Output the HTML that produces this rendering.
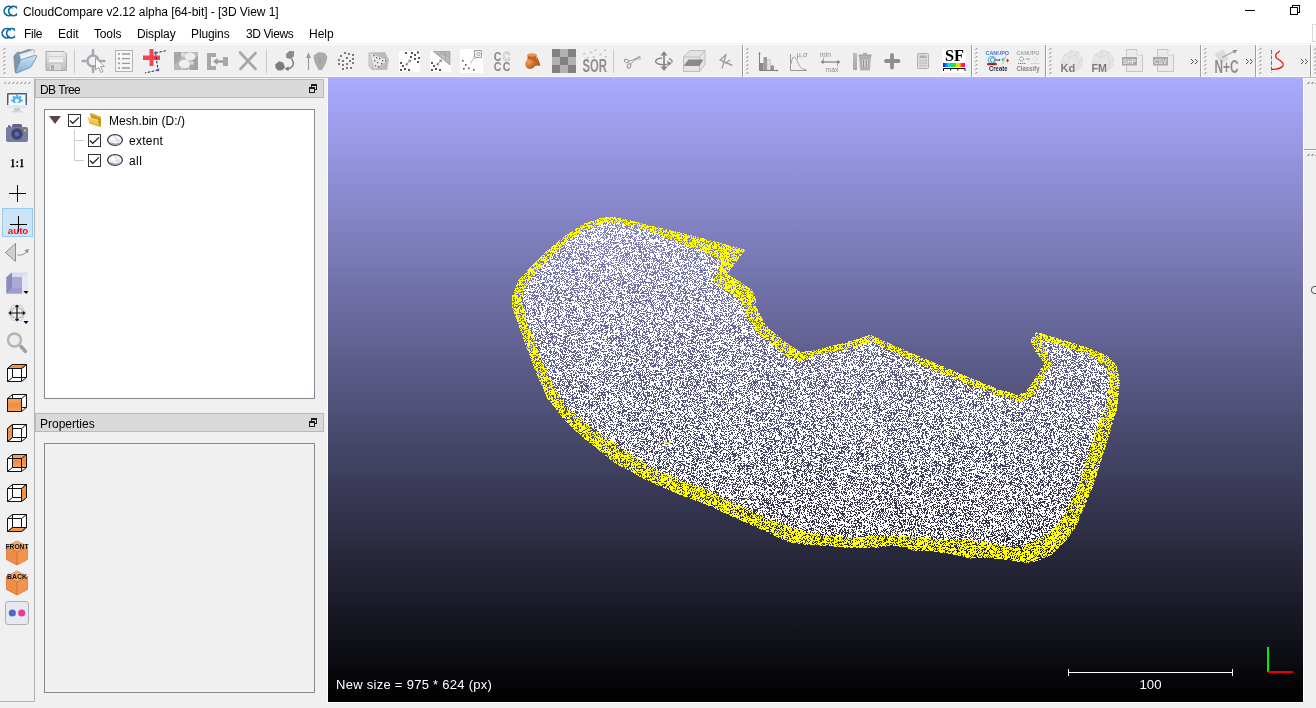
<!DOCTYPE html>
<html lang="en">
<head>
<meta charset="utf-8">
<title>CloudCompare v2.12 alpha [64-bit] - [3D View 1]</title>
<style>
html,body{margin:0;padding:0;}
body{width:1316px;height:708px;overflow:hidden;background:#f0f0f0;position:relative;
  font-family:"Liberation Sans",sans-serif;font-size:12px;color:#000;}
.abs{position:absolute;}
#titlebar{left:0;top:0;width:1316px;height:22px;background:#fff;}
#menubar{left:0;top:22px;width:1316px;height:21px;background:#fff;}
.t{position:absolute;white-space:nowrap;line-height:14px;will-change:transform;}
svg{will-change:transform;}
#toolbar{left:0;top:45px;width:1316px;height:32px;background:#f0f0f0;}
#tbline{left:0;top:43px;width:1316px;height:2px;background:linear-gradient(#f1f1f1 50%,#ffffff 50%);}
#tbbot{left:0;top:76px;width:1316px;height:3px;background:linear-gradient(#f8f8f8 33.3%,#bcbcbc 33.3%,#bcbcbc 66.6%,#f6f6f6 66.6%);}
#leftbar{left:0;top:78px;width:35px;height:624px;background:#f0f0f0;}
#view{left:328px;top:78px;width:975px;height:624px;
  background:linear-gradient(to bottom,#aaaaff 0%,#000000 100%);overflow:hidden;}
.docktitle{background:#d9d9d9;height:19px;box-sizing:border-box;border:1px solid #b9b9b9;}
.box{border:1px solid #828790;box-sizing:border-box;}
</style>
</head>
<body>
<div id="titlebar" class="abs">
  <span class="t" style="left:23px;top:5px;letter-spacing:-0.05px;">CloudCompare v2.12 alpha [64-bit] - [3D View 1]</span>
</div>
<div id="menubar" class="abs">
  <span class="t" style="left:24px;top:5px;letter-spacing:-0.3px;">File</span>
  <span class="t" style="left:58px;top:5px;">Edit</span>
  <span class="t" style="left:94px;top:5px;letter-spacing:-0.15px;">Tools</span>
  <span class="t" style="left:137px;top:5px;letter-spacing:-0.12px;">Display</span>
  <span class="t" style="left:191px;top:5px;letter-spacing:-0.12px;">Plugins</span>
  <span class="t" style="left:246px;top:5px;letter-spacing:-0.4px;">3D Views</span>
  <span class="t" style="left:309px;top:5px;">Help</span>
</div>
<div id="tbline" class="abs"></div>
<div id="toolbar" class="abs"></div>
<div id="tbbot" class="abs"></div>
<div id="leftbar" class="abs"></div>
<!--TOOLBAR-START-->
<svg class="abs" style="left:0;top:0" width="1316" height="80" viewBox="0 0 1316 80" font-family="Liberation Sans, sans-serif">
  <defs>
    <linearGradient id="gFold" x1="0" y1="0" x2="0" y2="1"><stop offset="0" stop-color="#cfe3f2"/><stop offset="1" stop-color="#7fb2d6"/></linearGradient>
    <linearGradient id="gGrey" x1="0" y1="0" x2="0" y2="1"><stop offset="0" stop-color="#e6e6e6"/><stop offset="1" stop-color="#bdbdbd"/></linearGradient>
    <linearGradient id="gRain" x1="0" y1="0" x2="1" y2="0"><stop offset="0" stop-color="#1010ff"/><stop offset="0.25" stop-color="#00d8ff"/><stop offset="0.5" stop-color="#20e020"/><stop offset="0.7" stop-color="#ffee00"/><stop offset="0.88" stop-color="#ff2020"/><stop offset="1" stop-color="#ff00c0"/></linearGradient>
    <radialGradient id="gOr" cx="0.35" cy="0.3" r="0.8"><stop offset="0" stop-color="#f0a060"/><stop offset="1" stop-color="#b85410"/></radialGradient>
    <g id="grip" fill="#a6a6a6"><rect x="1" y="0" width="1" height="1"/><rect x="0" y="1" width="1" height="1"/><rect x="2" y="0" width="1" height="1" fill="#cfcfcf"/><rect x="1" y="1" width="1" height="1" fill="#cfcfcf"/></g>
    <g id="gripcol">
      <use href="#grip" y="0"/><use href="#grip" y="4"/><use href="#grip" y="8"/><use href="#grip" y="12"/><use href="#grip" y="16"/><use href="#grip" y="20"/><use href="#grip" y="24"/>
    </g>
    <g id="tsep"><rect x="0" y="45" width="1" height="32" fill="#a0a0a0"/><rect x="1" y="45" width="1" height="32" fill="#ffffff"/></g>
    <g id="chev" fill="none" stroke="#3c3c3c" stroke-width="0.9"><path d="M0,0 L2.5,2.5 L0,5 M4,0 L6.5,2.5 L4,5"/></g>
  </defs>
  <!-- grips -->
  <use href="#gripcol" x="3" y="48"/>
  <use href="#gripcol" x="746" y="48"/>
  <use href="#gripcol" x="975" y="48"/>
  <use href="#gripcol" x="1049" y="48"/>
  <use href="#gripcol" x="1204" y="48"/>
  <use href="#gripcol" x="1259" y="48"/>
  <use href="#gripcol" x="1314" y="48"/>
  <!-- toolbar separators -->
  <use href="#tsep" x="742"/>
  <use href="#tsep" x="971"/>
  <use href="#tsep" x="1045"/>
  <use href="#tsep" x="1200"/>
  <use href="#tsep" x="1255"/>
  <use href="#tsep" x="1310"/>
  <!-- inner thin separators -->
  <rect x="74" y="49" width="1" height="24" fill="#c8c8c8"/>
  <rect x="266" y="49" width="1" height="24" fill="#c8c8c8"/>
  <rect x="613" y="49" width="1" height="24" fill="#c8c8c8"/>
  <!-- chevrons -->
  <use href="#chev" x="1191" y="59"/>
  <use href="#chev" x="1246" y="59"/>
  <use href="#chev" x="1301" y="59"/>

  <!-- 1 open folder -->
  <g>
    <path d="M13.800,56 L15,71.500 L17,72 L20,60 L34.500,52 L34,50 L28.500,49.500 L20,52.500 L17.500,52 Z" fill="#7d97ad" stroke="#6a8298" stroke-width="0.600"/>
    <path d="M19.500,54.500 L33.500,50 L35,53 L21.500,61.500 Z" fill="#f8f8f8" stroke="#c0c0c0" stroke-width="0.500"/>
    <path d="M20.500,56.500 L34.300,51.800" stroke="#d0d0d0" stroke-width="0.600"/>
    <path d="M15,72.300 L20.500,60.500 Q21,59.500 22.500,59 L35.500,55.300 Q37.300,55.200 36.500,57 L31.500,66 Q31,67.300 29.500,67.800 L17.500,72.800 Q15.500,73.300 15,72.300 Z" fill="url(#gFold)" stroke="#5f8fb4" stroke-width="0.800"/>
  </g>
  <!-- 2 save (disabled) -->
  <g>
    <path d="M46,51.500 L64,51.500 L66.500,54 L66.500,70.500 L46,70.500 Z" fill="url(#gGrey)" stroke="#ababab" stroke-width="1"/>
    <rect x="49" y="52" width="14" height="8" fill="#e9e9e9"/>
    <rect x="49" y="56" width="14" height="1" fill="#cfcfcf"/>
    <rect x="49" y="60" width="14" height="2" fill="#f6f6f6"/>
    <rect x="50" y="64" width="11" height="6" fill="#d9d9d9"/>
    <rect x="51" y="65" width="3" height="5" fill="#a9a9a9"/>
  </g>
  <!-- 3 pick/target with cursor -->
  <g>
    <circle cx="93" cy="61" r="5.500" fill="none" stroke="#a3a9b3" stroke-width="2.4"/>
    <path d="M93,50 L93,55 M93,67 L93,72 M82.500,61 L87,61 M99,61 L104.500,61" stroke="#a3a9b3" stroke-width="2.4" stroke-linecap="round"/>
    <path d="M95.500,58 L95.500,70 L98.500,67.500 L101,72.500 L103,71.500 L100.500,66.500 L104.500,66.500 Z" fill="#ffffff" stroke="#9a9a9a" stroke-width="0.9"/>
  </g>
  <!-- 4 list -->
  <g>
    <rect x="115.500" y="50.500" width="17" height="21" fill="#f6f6f6" stroke="#b4b4b4"/>
    <g fill="#9a9a9a"><circle cx="119" cy="54" r="1.100"/><circle cx="119" cy="58.700" r="1.100"/><circle cx="119" cy="63.300" r="1.100"/><circle cx="119" cy="68" r="1.100"/></g>
    <g stroke="#9a9a9a" stroke-width="1.300"><path d="M122,54 H130 M122,58.700 H130 M122,63.300 H130 M122,68 H130"/></g>
  </g>
  <!-- 5 red plus with dashed polyline -->
  <g>
    <path d="M149.500,49 H153.500 V55.500 H160 V60 H153.500 V66 H149.500 V60 H143 V55.500 H149.500 Z" fill="#f2454c"/>
    <path d="M155.500,53 L167,50.500 M155.500,53 L158,70 M158,70 L145,73" stroke="#222" stroke-width="1" stroke-dasharray="2.500,1.500" fill="none"/>
    <circle cx="155.500" cy="53" r="1.400" fill="#5a5af0"/><circle cx="158" cy="70" r="1.400" fill="#5a5af0"/>
  </g>
  <!-- 6 clone (sheep) disabled -->
  <g>
    <rect x="174" y="52" width="24" height="18" fill="#b9b9b9"/>
    <path d="M174,52 L182,52 L180,60 L174,64 Z" fill="#a6a6a6"/>
    <path d="M191,60 L198,56 L198,70 L190,70 Z" fill="#a3a3a3"/>
    <ellipse cx="190" cy="56.500" rx="5.500" ry="4" fill="#ededed"/>
    <ellipse cx="184.500" cy="64" rx="5.500" ry="4.200" fill="#efefef"/>
    <circle cx="183" cy="54.500" r="2.200" fill="#dcdcdc"/>
    <circle cx="192" cy="63" r="2" fill="#d6d6d6"/>
    <rect x="181" y="67" width="1" height="3" fill="#cfcfcf"/><rect x="188" y="67" width="1" height="3" fill="#cfcfcf"/>
  </g>
  <!-- 7 merge -->
  <g fill="#a8a8a8">
    <path d="M207,53 H216 V57 H211 V66 H216 V70 H207 Z"/>
    <rect x="223" y="57" width="5" height="9"/>
    <path d="M213,61.500 L217.500,58 L217.500,60.300 L223,60.300 L223,62.700 L217.500,62.700 L217.500,65 Z" fill="#9c9c9c"/>
  </g>
  <!-- 8 delete X -->
  <g stroke="#a6a6a6" stroke-width="2.600" stroke-linecap="round">
    <path d="M240,52.500 L255.500,69 M255.500,53 L240.500,69"/>
  </g>
  <!-- 9 register -->
  <g>
    <path d="M286,54 L289.500,51 L294.200,51.300 L293.800,56.500 L290.500,59 L286.300,58 Z" fill="#8a8a8a"/>
    <path d="M275.200,64.500 L279,61.200 L283,62.500 L285,67 L282.500,70.300 L278,70.600 L275.500,68 Z" fill="#7c7c7c"/>
    <path d="M291.500,58.500 Q294.500,63 292.500,66 Q290.500,68.800 287,69" fill="none" stroke="#7c7c7c" stroke-width="1.400"/>
    <path d="M284.500,68.800 L288.800,66.300 L288.500,71.200 Z" fill="#7c7c7c"/>
  </g>
  <!-- 10 normals -->
  <g>
    <path d="M308.500,56 V70" stroke="#9a9a9a" stroke-width="1.200"/>
    <path d="M308.500,52.500 L311,58 L306,58 Z" fill="#9a9a9a"/>
    <path d="M314,55 L319,52 L325,53 L327.500,57 L326,63 L322,70 L318.500,70 L315,63 L313.500,58 Z" fill="#ababab"/>
    <path d="M318,57 Q321,59 320,64" stroke="#9a9a9a" fill="none"/>
  </g>
  <!-- 11 sample points (dots) -->
  <g fill="#7a7a7a">
    <rect x="344" y="52" width="2" height="2"/><rect x="348" y="53" width="2" height="2"/><rect x="352" y="54" width="2" height="2"/>
    <rect x="340" y="55" width="2" height="2"/><rect x="346" y="57" width="2" height="2"/><rect x="352" y="58" width="2" height="2"/>
    <rect x="338" y="59" width="2" height="2"/><rect x="342" y="60" width="2" height="2"/><rect x="349" y="60" width="2" height="2"/>
    <rect x="338" y="63" width="2" height="2"/><rect x="342" y="64" width="2" height="2"/><rect x="346" y="63" width="2" height="2"/><rect x="352" y="62" width="2" height="2"/>
    <rect x="342" y="68" width="2" height="2"/><rect x="346" y="67" width="2" height="2"/><rect x="350" y="67" width="2" height="2"/>
  </g>
  <!-- 12 mesh sample -->
  <g>
    <path d="M368.500,52.500 L385,52 L389,60 L387,70 L372,70 L368.500,66 Z" fill="#bcbcbc"/>
    <path d="M370,53 L387.500,60.500 L375,69 Z" fill="#e9e9e9"/>
    <path d="M370,53 L368.500,66 L375,69 Z" fill="#cdcdcd"/>
    <g fill="#5a5a5a"><rect x="373" y="55" width="1.300" height="1.300"/><rect x="376" y="57" width="1.300" height="1.300"/><rect x="379" y="58" width="1.300" height="1.300"/><rect x="382" y="60" width="1.300" height="1.300"/><rect x="385" y="60" width="1.300" height="1.300"/><rect x="374" y="60" width="1.300" height="1.300"/><rect x="377" y="62" width="1.300" height="1.300"/><rect x="381" y="63" width="1.300" height="1.300"/><rect x="375" y="65" width="1.300" height="1.300"/><rect x="378" y="66" width="1.300" height="1.300"/></g>
  </g>
  <!-- 13 cloud/cloud dist -->
  <g>
    <rect x="399" y="51" width="21" height="21" fill="#fff"/>
    <g fill="#555"><rect x="405" y="52" width="2" height="2"/><rect x="411" y="52" width="2" height="2"/><rect x="417" y="51.500" width="2" height="2"/><rect x="414" y="54" width="2" height="2"/><rect x="410" y="56" width="2" height="2"/><rect x="418" y="57" width="2" height="2"/><rect x="414" y="58" width="2" height="2"/><rect x="417" y="61" width="2" height="2"/>
    <rect x="400" y="62" width="2" height="2"/><rect x="402" y="65" width="2" height="2"/><rect x="400" y="69" width="2" height="2"/><rect x="404" y="68" width="2" height="2"/><rect x="408" y="69" width="2" height="2"/></g>
    <path d="M406,65 L410.500,60 M406,65 l0.300,-2.200 M406,65 l2.200,-0.300 M410.500,60 l-2.200,0.300 M410.500,60 l-0.300,2.200" stroke="#777" stroke-width="0.900" fill="none"/>
  </g>
  <!-- 14 cloud/mesh dist -->
  <g>
    <rect x="430" y="51" width="21" height="21" fill="#fff"/>
    <path d="M433.500,51.500 L450,51.500 L450,65 Z" fill="#bdbdbd" stroke="#8c8c8c" stroke-width="0.700"/>
    <path d="M440,51.500 L450,58 M445,51.500 L446,61 M437,54 L450,54" stroke="#9a9a9a" stroke-width="0.600"/>
    <g fill="#555"><rect x="431" y="62" width="2" height="2"/><rect x="433" y="65" width="2" height="2"/><rect x="431" y="69" width="2" height="2"/><rect x="435" y="68" width="2" height="2"/><rect x="439" y="69" width="2" height="2"/></g>
    <path d="M437,65 L441.500,60 M437,65 l0.300,-2.200 M437,65 l2.200,-0.300 M441.500,60 l-2.200,0.300 M441.500,60 l-0.300,2.200" stroke="#777" stroke-width="0.900" fill="none"/>
  </g>
  <!-- 15 closest point set -->
  <g>
    <rect x="460" y="49" width="23" height="24" fill="#fff"/>
    <rect x="474.500" y="50.500" width="7" height="7" fill="#f4f4f4" stroke="#8a8a8a" stroke-width="0.800"/>
    <circle cx="478.500" cy="54" r="1.600" fill="none" stroke="#8a8a8a" stroke-width="0.700"/>
    <circle cx="474.500" cy="57.500" r="1.100" fill="#fff" stroke="#8a8a8a" stroke-width="0.700"/>
    <path d="M473.500,58.500 L470.500,63.500" stroke="#9a9a9a" stroke-width="0.700"/>
    <g fill="#555"><rect x="462" y="60" width="1.600" height="1.600"/><rect x="465" y="64" width="1.600" height="1.600"/><rect x="463" y="68" width="1.600" height="1.600"/><rect x="468" y="67.500" width="1.600" height="1.600"/><rect x="473" y="69" width="1.600" height="1.600"/></g>
  </g>
  <!-- 16 CC/CC -->
  <g font-weight="bold" font-size="12.400" fill="#868686">
    <text x="493.700" y="60.700" textLength="7.600" lengthAdjust="spacingAndGlyphs">C</text><text x="502.800" y="60.700" textLength="7.600" lengthAdjust="spacingAndGlyphs" fill="#fafafa" stroke="#c2c2c2" stroke-width="0.800">C</text>
    <text x="493.700" y="70.800" textLength="7.600" lengthAdjust="spacingAndGlyphs">C</text><text x="502.800" y="70.800" textLength="7.600" lengthAdjust="spacingAndGlyphs">C</text>
  </g>
  <!-- 17 primitives -->
  <g>
    <path d="M537,57 L540.300,65.300 L534,66.300 Z" fill="#c8641c"/><path d="M537,57 L540.300,65.300 L538.500,65.600 Z" fill="#a85010"/>
    <path d="M527.500,55 L527.500,62 Q532,64 536.500,62 L536.500,55 Z" fill="#c46218"/>
    <ellipse cx="532" cy="55" rx="4.500" ry="1.700" fill="#e89050"/>
    <circle cx="530.200" cy="64" r="4.900" fill="url(#gOr)"/>
  </g>
  <!-- 18 checker -->
  <g>
    <rect x="552" y="49" width="24" height="24" fill="#b2b2b2"/>
    <g fill="#818181"><rect x="552" y="49" width="8" height="8"/><rect x="568" y="49" width="8" height="8"/><rect x="560" y="57" width="8" height="8"/><rect x="552" y="65" width="8" height="8"/><rect x="568" y="65" width="8" height="8"/></g>
  </g>
  <!-- 19 SOR -->
  <g>
    <text x="582.500" y="72.300" font-weight="bold" font-size="17.500" fill="#8e8e8e" textLength="24.500" lengthAdjust="spacingAndGlyphs">SOR</text>
    <g stroke="#a8a8a8" stroke-width="0.800"><path d="M590,51.500 l2,2 m0,-2 l-2,2 M599.500,53.500 l2,2 m0,-2 l-2,2 M594.500,49.500 l1.500,1.500 m0,-1.500 l-1.500,1.500 M583.500,53 l1.500,1.500 m0,-1.500 l-1.500,1.500 M604,49.500 l1.500,1.500 m0,-1.500 l-1.500,1.500 M605,56 l1.500,1.500 m0,-1.500 l-1.500,1.500 M593,56 l1.500,1.500 m0,-1.500 l-1.500,1.500 M587,57 l1.300,1.300 m0,-1.300 l-1.300,1.300"/></g>
  </g>
  <!-- 20 scissors -->
  <g fill="none" stroke="#8c8c8c" stroke-width="0.900">
    <ellipse cx="626.500" cy="61" rx="2.200" ry="1.500" transform="rotate(25 626.500 61)"/>
    <ellipse cx="629" cy="66" rx="1.700" ry="2.200" transform="rotate(25 629 66)"/>
    <path d="M628.500,61.500 L640.500,57 M630,64.500 L639,56"/>
    <path d="M636,60 L641,58.500 M637,58 L640,56" stroke="#b4b4b4"/>
  </g>
  <!-- 21 translate/rotate -->
  <g>
    <path d="M664,54 V68" stroke="#858585" stroke-width="1.700"/>
    <path d="M664,51 L667.500,55.500 L660.500,55.500 Z M664,71 L667.500,66.500 L660.500,66.500 Z" fill="#858585"/>
    <path d="M669,58.500 Q673.500,60.500 671.500,62.500 M667,64.500 Q657,65.500 655.500,61.500 Q656,58.500 662,58" fill="none" stroke="#858585" stroke-width="1.300"/>
    <path d="M667.500,60.500 L671.500,63.500 L667.500,66.500 Z" fill="#858585"/>
  </g>
  <!-- 22 cross section box -->
  <g>
    <path d="M683.500,57 L690,50.500 L705,50.500 L705,64.500 L699.500,71.500 L683.500,71.500 Z" fill="#e4e4e4" stroke="#b2b2b2" stroke-width="0.800"/>
    <path d="M683.500,57 L699.500,57 L705,50.500 M699.500,57 L699.500,71.500" fill="none" stroke="#b2b2b2" stroke-width="0.800"/>
    <path d="M683.500,66 L688.500,59.500 L703.500,59.500 L699.500,66 Z" fill="#8a8a8a"/>
  </g>
  <!-- 23 polyline -->
  <g fill="none" stroke="#a0a0a0" stroke-width="1.400" stroke-linejoin="round">
    <path d="M722,68.500 L726,54.500 L720,60 L732.500,65.500 M725,63.500 L730,60"/>
  </g>
  <!-- 24 histogram -->
  <g>
    <rect x="760" y="63" width="3.500" height="7.500" fill="#8a8a8a"/>
    <rect x="763.500" y="57" width="3.500" height="13.500" fill="#9c9c9c"/>
    <rect x="767" y="59.500" width="3.500" height="11" fill="#e0e0e0" stroke="#b4b4b4" stroke-width="0.500"/>
    <rect x="770.500" y="65.500" width="3.500" height="5" fill="#929292"/>
    <path d="M759.500,53 V70.500 H778" fill="none" stroke="#808080" stroke-width="1"/>
    <path d="M759.500,52 l1.300,2 h-2.600 z M778.500,70.500 l-2,-1.300 v2.600 z" fill="#808080"/>
  </g>
  <!-- 25 mu sigma -->
  <g>
    <path d="M790.500,54 V70.500 H807" fill="none" stroke="#909090" stroke-width="0.900"/>
    <path d="M791,64 Q792.500,55.500 794.500,57 Q797,59 799,65 Q801,69.500 806,69.800" fill="none" stroke="#9a9a9a" stroke-width="0.900"/>
    <text x="796.500" y="57" font-size="7.500" fill="#8e8e8e">μ,σ</text>
  </g>
  <!-- 26 min/max -->
  <g>
    <text x="820" y="56.500" font-size="6.800" fill="#8e8e8e">min</text>
    <text x="825.500" y="71.500" font-size="6.800" fill="#8e8e8e">max</text>
    <path d="M823,62 H838" stroke="#9a9a9a" stroke-width="1.600"/>
    <path d="M820.500,62 l3,-2 v4 z M840.500,62 l-3,-2 v4 z" fill="#7c7c7c"/>
    <path d="M823.500,57.500 V62 M837.500,62 V66.500" stroke="#8c8c8c" stroke-width="0.700"/>
  </g>
  <!-- 27 trash with ramp -->
  <g>
    <rect x="853" y="53" width="4" height="17" fill="url(#gGrey)"/>
    <rect x="853" y="53" width="4" height="17" fill="#8c8c8c" opacity="0.450"/>
    <path d="M859.500,57 L870.500,57 L869.500,70 L860.500,70 Z" fill="#b4b4b4" stroke="#a0a0a0" stroke-width="0.600"/>
    <rect x="858.500" y="54.500" width="13" height="2.200" fill="#a4a4a4"/>
    <rect x="863" y="53" width="4" height="1.500" fill="#a4a4a4"/>
    <rect x="861.500" y="59" width="7" height="8.500" fill="#cfcfcf" stroke="#969696" stroke-width="0.500"/>
    <path d="M863.500,60 V67 M866.300,60 V67" stroke="#8a8a8a" stroke-width="0.900"/>
  </g>
  <!-- 28 plus -->
  <path d="M892,55 V67.500 M886,61 H898.500" stroke="#8e8e8e" stroke-width="3.800" stroke-linecap="round"/>
  <!-- 29 calculator -->
  <g>
    <rect x="917.500" y="53.500" width="11" height="15" rx="1" fill="#dcdcdc" stroke="#b0b0b0"/>
    <rect x="919.500" y="55.500" width="7" height="2.500" fill="#b0b0b0"/>
    <g fill="#b6b6b6"><rect x="919.500" y="60" width="1.800" height="1.300"/><rect x="922.200" y="60" width="1.800" height="1.300"/><rect x="924.900" y="60" width="1.800" height="1.300"/>
    <rect x="919.500" y="62.500" width="1.800" height="1.300"/><rect x="922.200" y="62.500" width="1.800" height="1.300"/><rect x="924.900" y="62.500" width="1.800" height="1.300"/>
    <rect x="919.500" y="65" width="1.800" height="1.300"/><rect x="922.200" y="65" width="1.800" height="1.300"/><rect x="924.900" y="65" width="1.800" height="1.300"/></g>
  </g>
  <!-- 30 SF -->
  <g>
    <rect x="942" y="49" width="24" height="24" fill="#fff"/>
    <text x="945" y="61" font-family="Liberation Serif, serif" font-weight="bold" font-size="16" fill="#000" textLength="19" lengthAdjust="spacingAndGlyphs">SF</text>
    <rect x="943" y="63" width="22" height="4" fill="url(#gRain)"/>
    <path d="M943.500,71 V68.500 H965 V71 M950.700,68.500 V70.500 M957.800,68.500 V70.500" fill="none" stroke="#000" stroke-width="1"/>
  </g>
  <!-- 31 CANUPO create -->
  <g>
    <text x="985.500" y="54.800" font-size="5.800" font-weight="bold" fill="#4a6fd0" textLength="23.500" lengthAdjust="spacingAndGlyphs">CANUPO</text>
    <circle cx="992" cy="60" r="3.800" fill="#d8f4ff" stroke="#38b8e8" stroke-width="0.900"/>
    <circle cx="992.500" cy="60" r="2.200" fill="none" stroke="#222" stroke-width="1" stroke-dasharray="1,0.700"/>
    <path d="M996,60 H999.500" stroke="#222" stroke-width="0.800"/><path d="M1000.500,60 l-1.600,-1.100 v2.200 z" fill="#222"/>
    <path d="M1001.500,59 l2,-1 l0.500,2 l-2,1 z" fill="#28a0ff"/>
    <path d="M1006,55.500 L1002.500,64" stroke="#9ad06a" stroke-width="0.900"/>
    <path d="M1007.500,58.500 l1.500,2 l-1.500,2 l-1.500,-2 z" fill="#f02828"/>
    <rect x="987" y="63" width="10" height="2.200" rx="1" fill="#f02020"/>
    <path d="M988.500,64.100 H995.500" stroke="#222" stroke-width="1" stroke-dasharray="1.200,0.600"/>
    <text x="989" y="71.300" font-size="6.600" font-weight="bold" fill="#1e2846" textLength="18.500" lengthAdjust="spacingAndGlyphs">Create</text>
  </g>
  <!-- 32 CANUPO classify (disabled) -->
  <g>
    <text x="1016.500" y="54.800" font-size="5.800" font-weight="bold" fill="#a4a4a4" textLength="23" lengthAdjust="spacingAndGlyphs">CANUPO</text>
    <circle cx="1021.500" cy="59" r="2.100" fill="none" stroke="#6e6e6e" stroke-width="1" stroke-dasharray="1,0.700"/>
    <path d="M1025.500,59 H1029" stroke="#a0a0a0" stroke-width="0.800"/><path d="M1030,59 l-1.600,-1.100 v2.200 z" fill="#a0a0a0"/>
    <circle cx="1035" cy="59" r="2.100" fill="none" stroke="#c4c4c4" stroke-width="0.900" stroke-dasharray="1,0.700"/>
    <path d="M1018,63.500 H1026" stroke="#7a7a7a" stroke-width="1" stroke-dasharray="1.200,0.700"/>
    <path d="M1031,63.500 H1039.500" stroke="#c4c4c4" stroke-width="1" stroke-dasharray="1.200,0.700"/>
    <text x="1016.500" y="71.300" font-size="6.600" font-weight="bold" fill="#848484" textLength="23" lengthAdjust="spacingAndGlyphs">Classify</text>
  </g>
  <!-- 33 Kd -->
  <g>
    <path d="M1061,63 L1064,55 L1071,50.500 L1078,52 L1082.500,59 L1082,66 L1077,70.500 L1070,71 L1063,69 Z" fill="#e6e6e6" stroke="#d2d2d2" stroke-width="0.600"/>
    <path d="M1064,55 L1070,57 L1071,50.500 M1070,57 L1076,55 L1078,52 M1076,55 L1079,62 L1082.500,59 M1079,62 L1077,70.500 M1070,57 L1068,63 L1061,63" fill="none" stroke="#d0d0d0" stroke-width="0.600"/>
    <text x="1060.500" y="72" font-size="11" font-weight="bold" fill="#7c7c7c">Kd</text>
  </g>
  <!-- 34 FM -->
  <g>
    <path d="M1092,63 L1095,55 L1102,50.500 L1109,52 L1113.500,59 L1113,66 L1108,70.500 L1101,71 L1094,69 Z" fill="#e6e6e6" stroke="#d2d2d2" stroke-width="0.600"/>
    <path d="M1095,55 L1101,57 L1102,50.500 M1101,57 L1107,55 L1109,52 M1107,55 L1110,62 L1113.500,59 M1110,62 L1108,70.500 M1101,57 L1099,63 L1092,63" fill="none" stroke="#d0d0d0" stroke-width="0.600"/>
    <text x="1091.500" y="72" font-size="11" font-weight="bold" fill="#7c7c7c" textLength="15.500" lengthAdjust="spacingAndGlyphs">FM</text>
  </g>
  <!-- 35 SHP -->
  <g>
    <path d="M1126.500,49.500 L1137,49.500 L1142.500,55 L1142.500,71.500 L1126.500,71.500 Z" fill="#ebebeb" stroke="#c6c6c6"/>
    <path d="M1137,49.500 L1137,55 L1142.500,55" fill="#f8f8f8" stroke="#c6c6c6" stroke-width="0.800"/>
    <rect x="1122" y="57" width="15" height="8.500" fill="#a8a8a8"/>
    <text x="1123" y="64" font-size="7" font-weight="bold" fill="#e6e6e6" textLength="13" lengthAdjust="spacingAndGlyphs">SHP</text>
  </g>
  <!-- 36 CSV -->
  <g>
    <path d="M1157.500,49.500 L1168,49.500 L1173.500,55 L1173.500,71.500 L1157.500,71.500 Z" fill="#ebebeb" stroke="#c6c6c6"/>
    <path d="M1168,49.500 L1168,55 L1173.500,55" fill="#f8f8f8" stroke="#c6c6c6" stroke-width="0.800"/>
    <rect x="1153" y="57" width="15" height="8.500" fill="#a8a8a8"/>
    <text x="1154" y="64" font-size="7" font-weight="bold" fill="#e6e6e6" textLength="13" lengthAdjust="spacingAndGlyphs">CSV</text>
  </g>
  <!-- 37 N+C -->
  <g>
    <path d="M1215,54 L1223,50 L1228.500,59 L1221,63.500 Z" fill="#dcdcdc" stroke="#d0d0d0" stroke-width="0.500"/>
    <path d="M1222,57.500 L1235,51" stroke="#8c8c8c" stroke-width="0.900"/>
    <path d="M1237.500,49.800 L1232.500,50.300 L1234.500,53.800 Z" fill="#8c8c8c"/>
    <text x="1214.500" y="72.500" font-size="17.500" font-weight="bold" fill="#8e8e8e" textLength="24" lengthAdjust="spacingAndGlyphs">N+C</text>
  </g>
  <!-- 38 red curve -->
  <g>
    <path d="M1271.500,50 V72.500" stroke="#666" stroke-width="0.900" stroke-dasharray="4,1.500"/>
    <path d="M1280,51 Q1273,55 1277,58.500 Q1285,63 1283,66 Q1280,69.500 1271.500,69.300" fill="none" stroke="#f01010" stroke-width="1.300"/>
  </g>
</svg>
<!--TOOLBAR-END-->
<!--LEFT-START-->
<svg class="abs" style="left:0;top:78px" width="36" height="630" viewBox="0 78 36 630" font-family="Liberation Sans, sans-serif">
  <defs>
    <linearGradient id="gOrF" x1="0" y1="0" x2="0" y2="1"><stop offset="0" stop-color="#f7a868"/><stop offset="0.5" stop-color="#f08c3c"/><stop offset="1" stop-color="#f6a560"/></linearGradient>
    <g id="cubeWire" fill="none" stroke="#111" stroke-width="1">
      <path d="M7.500,368.500 H21.500 V381.500 H7.500 Z M12.500,364.500 H26.500 V377.500 H12.500 Z M7.500,368.500 L12.500,364.500 M21.500,368.500 L26.500,364.500 M21.500,381.500 L26.500,377.500 M7.500,381.500 L12.500,377.500"/>
    </g>
    <g id="cubeBase"><path d="M7.500,368.500 L12.500,364.500 H26.500 V377.500 L21.500,381.500 H7.500 Z" fill="#fff"/></g>
    <g id="hexcube">
      <path d="M17,541 L27.500,546.500 L27.500,559.500 L17,565 L6.500,559.500 L6.500,546.500 Z" fill="#ef8c48" stroke="#c86a28" stroke-width="0.700"/>
      <path d="M17,541 L27.500,546.500 L17,552 L6.500,546.500 Z" fill="#f6a868"/>
      <path d="M17,552 L17,565 L27.500,559.500 L27.500,546.500 Z" fill="#f29450"/>
      <path d="M6.500,546.500 L17,552 L27.500,546.500 M17,552 V565" fill="none" stroke="#c86a28" stroke-width="0.700"/>
    </g>
  </defs>
  <!-- top grip -->
  <g><rect x="5" y="82" width="1" height="1" fill="#a6a6a6"/><rect x="4" y="83" width="1" height="1" fill="#a6a6a6"/><rect x="6" y="82" width="1" height="1" fill="#cfcfcf"/><rect x="5" y="83" width="1" height="1" fill="#cfcfcf"/><rect x="9" y="82" width="1" height="1" fill="#a6a6a6"/><rect x="8" y="83" width="1" height="1" fill="#a6a6a6"/><rect x="10" y="82" width="1" height="1" fill="#cfcfcf"/><rect x="9" y="83" width="1" height="1" fill="#cfcfcf"/><rect x="13" y="82" width="1" height="1" fill="#a6a6a6"/><rect x="12" y="83" width="1" height="1" fill="#a6a6a6"/><rect x="14" y="82" width="1" height="1" fill="#cfcfcf"/><rect x="13" y="83" width="1" height="1" fill="#cfcfcf"/><rect x="17" y="82" width="1" height="1" fill="#a6a6a6"/><rect x="16" y="83" width="1" height="1" fill="#a6a6a6"/><rect x="18" y="82" width="1" height="1" fill="#cfcfcf"/><rect x="17" y="83" width="1" height="1" fill="#cfcfcf"/><rect x="21" y="82" width="1" height="1" fill="#a6a6a6"/><rect x="20" y="83" width="1" height="1" fill="#a6a6a6"/><rect x="22" y="82" width="1" height="1" fill="#cfcfcf"/><rect x="21" y="83" width="1" height="1" fill="#cfcfcf"/><rect x="25" y="82" width="1" height="1" fill="#a6a6a6"/><rect x="24" y="83" width="1" height="1" fill="#a6a6a6"/><rect x="26" y="82" width="1" height="1" fill="#cfcfcf"/><rect x="25" y="83" width="1" height="1" fill="#cfcfcf"/><rect x="29" y="82" width="1" height="1" fill="#a6a6a6"/><rect x="28" y="83" width="1" height="1" fill="#a6a6a6"/><rect x="30" y="82" width="1" height="1" fill="#cfcfcf"/><rect x="29" y="83" width="1" height="1" fill="#cfcfcf"/></g>
  <!-- monitor -->
  <g>
    <rect x="7" y="93" width="20" height="14" rx="1" fill="#4c5d70"/>
    <rect x="8.500" y="94.500" width="17" height="10" fill="#f4fbff"/>
    <g fill="#52b4f2"><circle cx="17" cy="100.5" r="4.200"/><rect x="15.9" y="94.7" width="2.200" height="2.400" transform="rotate(0 17 100.5)"/><rect x="15.9" y="94.7" width="2.200" height="2.400" transform="rotate(45 17 100.5)"/><rect x="15.9" y="94.7" width="2.200" height="2.400" transform="rotate(-45 17 100.5)"/><rect x="15.9" y="94.7" width="2.200" height="2.400" transform="rotate(90 17 100.5)"/><rect x="15.9" y="94.7" width="2.200" height="2.400" transform="rotate(270 17 100.5)"/></g><circle cx="17" cy="100.8" r="2" fill="#f4fbff"/>
    <rect x="8.500" y="103" width="17" height="2" fill="#f4fbff"/>
    <rect x="7" y="105" width="20" height="3" fill="#e2e6ea"/>
    <rect x="14" y="108" width="6" height="3" fill="#c8ccd2"/>
    <rect x="11" y="111" width="12" height="1.500" rx="0.700" fill="#d4d8dc"/>
  </g>
  <!-- camera -->
  <g>
    <rect x="12" y="124" width="10" height="5" rx="1.500" fill="#5c6488"/>
    <rect x="8" y="125.500" width="2.500" height="2" fill="#4a5070"/>
    <rect x="6" y="127" width="22" height="15" rx="2" fill="#737ca2"/>
    <circle cx="17" cy="134" r="6" fill="#4a5070"/>
    <circle cx="17" cy="134" r="4.300" fill="#39405e"/>
    <circle cx="17" cy="134" r="2.600" fill="#5866b8"/>
    <circle cx="16" cy="133" r="0.800" fill="#e05a78"/>
    <circle cx="25" cy="130.500" r="1.100" fill="#f2c838"/>
  </g>
  <!-- 1:1 -->
  <text x="10" y="167.300" font-family="Liberation Serif, serif" font-weight="bold" font-size="13" fill="#000" textLength="14.500" lengthAdjust="spacingAndGlyphs">1:1</text>
  <rect x="11" y="167" width="3" height="0.800" fill="#d020c0" opacity="0.600"/><rect x="20" y="167" width="3" height="0.800" fill="#d020c0" opacity="0.600"/>
  <!-- cross -->
  <path d="M17.500,185 V202 M9,193.500 H26" stroke="#000" stroke-width="1" shape-rendering="crispEdges"/>
  <!-- auto (highlighted) -->
  <rect x="2.500" y="208.500" width="30" height="28" fill="#cce4f7" stroke="#99c9ef"/>
  <path d="M18.500,216 V232 M10,224.500 H27" stroke="#000" stroke-width="1" shape-rendering="crispEdges"/>
  <text x="7.800" y="234" font-size="9" font-weight="bold" fill="#ee1010" textLength="20.500" lengthAdjust="spacingAndGlyphs">auto</text>
  <!-- view from triangle -->
  <path d="M15.500,243.500 L15.500,261.500 L5.500,252.500 Z" fill="#d0d0d0" stroke="#8e8e8e" stroke-width="1"/>
  <path d="M17.500,255 Q24,256 27.500,250.500" fill="none" stroke="#8e8e8e" stroke-width="1"/>
  <path d="M29,249 L24.500,250 L27.500,253.500 Z" fill="#8e8e8e"/>
  <!-- lavender cube -->
  <g>
    <path d="M6.500,277 L12,272.500 L28,272.500 L28,288 L22,293.500 L6.500,293.500 Z" fill="#d9d9f2"/>
    <path d="M6.500,277 L22,277 L22,293.500 L6.500,293.500 Z" fill="#a9a9d4"/>
    <path d="M6.500,277 L12,272.500 L12,288 L6.500,293.500 Z" fill="#8a8abc"/>
    <path d="M12,288 L28,288 L22,293.500 L6.500,293.500 Z" fill="#9a9acc" opacity="0.800"/>
    <path d="M22,277 L28,272.500 L28,288 L22,293.500 Z" fill="#e6e6f8"/>
    <path d="M23.500,291 h5 l-2.500,3 z" fill="#000"/>
  </g>
  <!-- pan -->
  <g>
    <ellipse cx="17" cy="313" rx="8.500" ry="5" fill="none" stroke="#e8a0a0" stroke-width="0.800"/>
    <ellipse cx="17" cy="313" rx="5" ry="8.500" fill="none" stroke="#a0d8a0" stroke-width="0.800" transform="rotate(30 17 313)"/>
    <ellipse cx="17" cy="313" rx="5" ry="8.500" fill="none" stroke="#a0b8ee" stroke-width="0.800" transform="rotate(-30 17 313)"/>
    <path d="M17,306.500 V319.500 M10.500,313 H23.500" stroke="#111" stroke-width="1.200"/>
    <path d="M17,304.500 l2.200,2.600 h-4.400 z M17,321.500 l2.200,-2.600 h-4.400 z M8.500,313 l2.600,-2.200 v4.400 z M25.500,313 l-2.600,-2.200 v4.400 z" fill="#111"/>
    <path d="M23.500,321 h5 l-2.500,3 z" fill="#000"/>
  </g>
  <!-- magnifier -->
  <g>
    <circle cx="14.500" cy="340" r="6.500" fill="#ececec" stroke="#b4b4b4" stroke-width="2.400"/>
    <path d="M21,346.500 L25.500,351.500" stroke="#a0a0a0" stroke-width="3.400" stroke-linecap="round"/>
  </g>
  <!-- cubes -->
  <g><use href="#cubeBase"/><use href="#cubeWire"/><path d="M7.500,368.500 L12.500,364.500 H26.500 L21.500,368.500 Z" fill="url(#gOrF)" stroke="#111" stroke-width="1"/></g>
  <g transform="translate(0,30)"><use href="#cubeBase"/><use href="#cubeWire"/><path d="M7.500,368.500 H21.500 V381.500 H7.500 Z" fill="url(#gOrF)" stroke="#111" stroke-width="1"/></g>
  <g transform="translate(0,60)"><use href="#cubeBase"/><use href="#cubeWire"/><path d="M7.500,368.500 L12.500,364.500 V377.500 L7.500,381.500 Z" fill="url(#gOrF)" stroke="#111" stroke-width="1"/></g>
  <g transform="translate(0,90)"><use href="#cubeBase"/><path d="M12.500,364.500 H26.500 V377.500 H12.500 Z" fill="url(#gOrF)"/><use href="#cubeWire"/></g>
  <g transform="translate(0,120)"><use href="#cubeBase"/><use href="#cubeWire"/><path d="M21.500,368.500 L26.500,364.500 V377.500 L21.500,381.500 Z" fill="url(#gOrF)" stroke="#111" stroke-width="1"/></g>
  <g transform="translate(0,150)"><use href="#cubeBase"/><use href="#cubeWire"/><path d="M7.500,381.500 L12.500,377.500 H26.500 L21.500,381.500 Z" fill="url(#gOrF)" stroke="#111" stroke-width="1"/></g>
  <!-- FRONT / BACK -->
  <use href="#hexcube"/>
  <text x="5.500" y="549.400" font-size="7.200" font-weight="bold" fill="#111" textLength="23" lengthAdjust="spacingAndGlyphs">FRONT</text>
  <use href="#hexcube" y="30"/>
  <text x="7" y="579.400" font-size="7.200" font-weight="bold" fill="#111" textLength="20" lengthAdjust="spacingAndGlyphs">BACK</text>
  <!-- stereo (flickr like) -->
  <rect x="5.500" y="601.500" width="23" height="23" rx="2.500" fill="#e6eaee" stroke="#a8b0b8"/>
  <circle cx="12.300" cy="613" r="3.600" fill="#4a6cc8"/>
  <circle cx="21.700" cy="613" r="3.600" fill="#f0389a"/>
</svg>
<!--LEFT-END-->


<!-- DB Tree dock -->
<div class="abs docktitle" style="left:35px;top:79px;width:289px;"></div>
<span class="t" style="left:40px;top:83px;letter-spacing:-0.55px;">DB Tree</span>
<div class="abs box" style="left:44px;top:109px;width:271px;height:290px;background:#fff;"></div>
<!--TREE-START-->
<svg class="abs" style="left:44px;top:109px" width="160" height="64" viewBox="44 109 160 64">
  <defs>
    <g id="chk">
      <rect x="0.500" y="0.500" width="12" height="12" fill="#fff" stroke="#333"/>
      <path d="M1.900,6.500 L4.800,9.300 L11,3.400" fill="none" stroke="#222" stroke-width="1.200"/>
    </g>
    <g id="cloudic">
      <ellipse cx="8" cy="6" rx="7.400" ry="5.400" fill="#f2f5fa" stroke="#3a3a3a" stroke-width="1.300"/>
      <path d="M1.800,7.500 Q4,11.300 9,11 Q13.500,10.600 14.600,7.500 Q12,9.500 8,9.400 Q4,9.300 1.800,7.500 Z" fill="#9aa2ae"/>
      <ellipse cx="6" cy="5" rx="2.600" ry="1.800" fill="#ffffff"/>
      <ellipse cx="10.500" cy="6.500" rx="2.400" ry="1.600" fill="#d4def0"/>
      <ellipse cx="8.300" cy="3.600" rx="1.800" ry="1" fill="#d8e2f2"/>
      <ellipse cx="5" cy="7.800" rx="1.800" ry="1" fill="#dce4f0"/>
    </g>
  </defs>
  <path d="M49,116 H61 L55,124 Z" fill="#5e4444"/>
  <use href="#chk" x="68" y="114"/>
  <!-- folder -->
  <path d="M89.800,113.200 L93.600,114 L101,117 L101,126.500 L98.500,126.500 L91,118 Z" fill="#c9961f"/>
  <path d="M89.800,113.200 L93.600,114 L101,117 L101,118.500 L93,115.500 L90.200,115 Z" fill="#e0b03a"/>
  <path d="M87.400,117 L97.600,119.700 L99.500,126.600 L89.500,123.400 Z" fill="#f0c850"/>
  <path d="M87.400,117 L97.600,119.700 L97.900,121 L87.800,118.300 Z" fill="#f9e08c"/>
  <path d="M89,122 L99,125.200 L99.500,126.600 L89.500,123.400 Z" fill="#dca830"/>
  <!-- tree lines -->
  <path d="M74.500,130 V160.500 H84 M74.500,140.500 H84" fill="none" stroke="#d4ccc4" stroke-width="1" shape-rendering="crispEdges"/>
  <use href="#chk" x="88" y="134"/>
  <use href="#cloudic" x="107" y="134"/>
  <use href="#chk" x="88" y="154"/>
  <use href="#cloudic" x="107" y="154"/>
</svg>
<!--TREE-END-->
<span class="t" style="left:109px;top:114px;letter-spacing:0.05px;">Mesh.bin (D:/)</span>
<span class="t" style="left:129px;top:134px;letter-spacing:0.25px;">extent</span>
<span class="t" style="left:129px;top:154px;letter-spacing:0.4px;">all</span>

<!-- Properties dock -->
<div class="abs docktitle" style="left:35px;top:413px;width:289px;"></div>
<span class="t" style="left:40px;top:417px;">Properties</span>
<div class="abs box" style="left:44px;top:443px;width:271px;height:250px;background:#f0f0f0;"></div>

<!-- 3D view -->
<div id="view" class="abs">
  <svg class="abs" style="left:0;top:0" width="975" height="624" viewBox="0 0 975 624" shape-rendering="crispEdges">
    <defs>
      <pattern id="pw" width="128" height="128" patternUnits="userSpaceOnUse"><path stroke="#fff" stroke-width="1" fill="none" d="M0 .5h1m2 0h3m2 0h2m1 0h1m1 0h2m1 0h1m2 0h2m2 0h13m3 0h1m2 0h2m3 0h1m2 0h1m3 0h1m1 0h2m1 0h2m3 0h3m1 0h5m3 0h3m2 0h1m1 0h2m2 0h2m2 0h1m5 0h1m1 0h2m2 0h6m2 0h4m5 0h1m2 0h3m1 0h1M0 1.5h1m1 0h6m1 0h8m1 0h2m2 0h3m1 0h1m3 0h1m2 0h2m1 0h1m1 0h1m1 0h2m2 0h1m1 0h1m2 0h3m1 0h1m3 0h1m3 0h4m1 0h3m1 0h3m2 0h3m2 0h2m3 0h1m2 0h1m1 0h1m1 0h2m1 0h1m3 0h3m4 0h1m1 0h3m3 0h1m2 0h1m1 0h3m3 0h2M1 2.5h1m1 0h2m1 0h2m1 0h4m1 0h1m1 0h1m2 0h4m1 0h2m1 0h1m1 0h3m3 0h2m5 0h1m1 0h4m1 0h1m3 0h4m2 0h2m3 0h4m1 0h2m1 0h1m1 0h1m1 0h2m1 0h1m1 0h1m3 0h3m1 0h1m1 0h1m1 0h2m6 0h3m2 0h2m5 0h5m1 0h1m1 0h5m1 0h1M0 3.5h1m1 0h4m1 0h1m2 0h5m3 0h1m1 0h3m1 0h1m2 0h1m2 0h1m7 0h3m2 0h1m2 0h3m1 0h1m3 0h1m2 0h1m4 0h1m2 0h1m1 0h4m2 0h1m1 0h4m1 0h4m3 0h2m1 0h1m1 0h1m5 0h1m3 0h3m1 0h1m5 0h2m1 0h9m2 0h1M0 4.5h4m3 0h1m1 0h1m1 0h1m2 0h2m1 0h6m5 0h1m4 0h1m8 0h2m3 0h1m1 0h4m1 0h2m1 0h2m2 0h1m2 0h2m1 0h2m1 0h3m1 0h1m3 0h1m1 0h1m1 0h1m2 0h2m3 0h1m2 0h2m2 0h1m1 0h1m1 0h1m3 0h4m1 0h1m1 0h1m2 0h7m2 0h2M2 5.5h1m1 0h1m1 0h6m1 0h1m1 0h1m1 0h1m3 0h1m2 0h2m2 0h1m2 0h1m1 0h2m1 0h4m2 0h2m1 0h5m5 0h1m3 0h2m2 0h1m2 0h5m1 0h1m5 0h1m1 0h1m3 0h2m1 0h2m1 0h5m2 0h3m1 0h3m1 0h2m3 0h3m1 0h2m3 0h1m1 0h1m4 0h1M1 6.5h6m1 0h1m2 0h4m1 0h3m1 0h3m1 0h1m7 0h2m5 0h1m2 0h2m1 0h3m3 0h2m1 0h2m1 0h3m1 0h3m2 0h1m1 0h2m2 0h1m4 0h1m7 0h2m2 0h3m3 0h1m1 0h3m1 0h3m6 0h1m3 0h1m1 0h3m3 0h1m4 0h1M0 7.5h1m6 0h2m1 0h1m1 0h9m2 0h1m1 0h2m2 0h1m1 0h1m1 0h1m2 0h2m1 0h4m1 0h1m2 0h1m3 0h2m2 0h1m1 0h1m1 0h4m4 0h2m1 0h2m1 0h1m1 0h2m1 0h3m2 0h2m2 0h1m1 0h3m4 0h1m1 0h1m2 0h2m1 0h3m3 0h1m1 0h3m1 0h5m1 0h1m2 0h3M4 8.5h8m3 0h2m2 0h4m1 0h2m2 0h1m1 0h5m2 0h2m1 0h7m2 0h1m1 0h3m1 0h1m5 0h1m2 0h1m1 0h2m3 0h5m1 0h7m6 0h2m1 0h1m1 0h1m1 0h1m2 0h1m1 0h1m1 0h3m1 0h1m3 0h1m3 0h1m2 0h1m2 0h1m1 0h1m1 0h2M0 9.5h1m1 0h7m5 0h1m1 0h1m1 0h2m2 0h1m1 0h1m3 0h4m1 0h1m2 0h2m2 0h1m1 0h2m2 0h1m1 0h1m1 0h1m1 0h2m3 0h3m2 0h2m4 0h6m3 0h2m3 0h2m3 0h3m4 0h2m3 0h1m1 0h2m6 0h2m1 0h1m1 0h1m2 0h1m1 0h2m1 0h3M0 10.5h9m1 0h2m5 0h10m1 0h3m3 0h2m1 0h1m1 0h1m1 0h1m2 0h6m2 0h1m1 0h1m1 0h3m1 0h3m4 0h2m1 0h1m3 0h1m2 0h4m3 0h1m1 0h1m1 0h4m1 0h2m1 0h1m3 0h1m3 0h3m1 0h1m1 0h3m1 0h1m2 0h1m1 0h3m2 0h4M0 11.5h1m3 0h1m1 0h1m1 0h2m1 0h3m2 0h1m4 0h1m1 0h1m3 0h2m1 0h2m2 0h1m3 0h1m3 0h1m1 0h1m1 0h2m3 0h1m2 0h2m1 0h4m1 0h4m4 0h2m2 0h1m4 0h2m1 0h3m1 0h4m1 0h1m3 0h2m2 0h3m1 0h2m2 0h1m3 0h1m1 0h3m1 0h4m1 0h1m2 0h1m1 0h1M1 12.5h2m1 0h1m1 0h1m1 0h7m1 0h2m1 0h1m1 0h5m3 0h1m1 0h3m6 0h2m3 0h2m2 0h1m3 0h2m1 0h2m1 0h2m4 0h2m1 0h1m1 0h1m2 0h3m3 0h3m2 0h1m3 0h1m2 0h1m1 0h1m1 0h5m1 0h2m4 0h4m3 0h1m1 0h2m1 0h2m2 0h2m2 0h1M1 13.5h6m4 0h7m2 0h3m2 0h9m1 0h3m1 0h1m1 0h5m2 0h2m1 0h1m2 0h1m1 0h4m1 0h1m2 0h2m1 0h1m2 0h10m4 0h3m4 0h2m2 0h1m3 0h8m3 0h2m1 0h2m1 0h1m1 0h1m1 0h2m5 0h1M0 14.5h2m2 0h2m1 0h1m5 0h2m1 0h2m2 0h2m1 0h4m2 0h4m1 0h4m1 0h1m2 0h1m2 0h6m1 0h6m3 0h1m1 0h2m4 0h6m1 0h3m6 0h4m2 0h4m1 0h3m1 0h1m1 0h2m1 0h2m5 0h4m2 0h2m2 0h1m1 0h1m1 0h2M5 15.5h2m3 0h1m1 0h1m2 0h1m2 0h2m1 0h3m4 0h4m1 0h1m1 0h1m2 0h2m1 0h2m2 0h1m1 0h2m1 0h1m4 0h3m1 0h2m3 0h1m1 0h1m1 0h1m1 0h5m1 0h2m1 0h2m2 0h1m1 0h1m3 0h1m1 0h1m1 0h1m1 0h3m1 0h3m1 0h1m2 0h3m2 0h1m1 0h2m1 0h10m1 0h1M1 16.5h1m1 0h7m5 0h1m1 0h7m1 0h1m3 0h1m1 0h2m2 0h1m2 0h3m2 0h2m5 0h2m1 0h1m1 0h2m1 0h4m3 0h2m5 0h2m1 0h1m1 0h1m1 0h3m2 0h7m1 0h2m1 0h3m1 0h4m2 0h1m1 0h1m1 0h1m1 0h1m3 0h3m2 0h1m2 0h3m1 0h1M0 17.5h1m1 0h4m1 0h1m2 0h1m2 0h2m1 0h1m6 0h2m1 0h1m1 0h1m1 0h1m1 0h8m2 0h2m1 0h2m4 0h1m1 0h2m1 0h2m2 0h3m1 0h1m1 0h2m1 0h2m3 0h2m1 0h1m1 0h2m1 0h1m1 0h4m1 0h1m1 0h2m3 0h1m2 0h1m1 0h3m3 0h1m3 0h2m3 0h1m3 0h1m1 0h1m2 0h3M0 18.5h1m3 0h1m5 0h1m1 0h1m2 0h4m1 0h1m1 0h2m1 0h2m2 0h2m1 0h1m1 0h1m1 0h1m1 0h3m1 0h1m1 0h1m2 0h1m1 0h2m3 0h1m1 0h1m1 0h3m2 0h2m3 0h2m6 0h2m1 0h1m1 0h1m4 0h4m1 0h2m3 0h1m1 0h1m3 0h3m2 0h2m1 0h1m1 0h1m1 0h1m4 0h1m3 0h1m1 0h1m1 0h1M1 19.5h1m1 0h1m2 0h1m1 0h2m1 0h2m2 0h1m1 0h7m3 0h1m2 0h1m4 0h1m2 0h4m2 0h6m4 0h1m1 0h3m2 0h2m1 0h1m1 0h5m2 0h1m1 0h1m1 0h3m2 0h5m2 0h5m1 0h2m4 0h1m1 0h3m2 0h4m1 0h6m2 0h6M0 20.5h6m5 0h1m1 0h6m3 0h1m1 0h7m2 0h1m2 0h1m1 0h2m7 0h5m3 0h1m1 0h1m2 0h1m1 0h1m3 0h2m1 0h1m5 0h2m2 0h1m3 0h2m3 0h2m1 0h4m2 0h1m1 0h2m2 0h1m1 0h1m5 0h5m2 0h1m1 0h1m1 0h1m2 0h3M1 21.5h5m1 0h1m1 0h1m3 0h1m3 0h4m1 0h1m2 0h2m1 0h4m2 0h2m3 0h2m3 0h2m1 0h1m1 0h1m2 0h2m1 0h5m3 0h3m1 0h1m1 0h1m3 0h2m1 0h3m2 0h4m2 0h1m4 0h1m2 0h2m1 0h1m4 0h1m1 0h3m1 0h4m1 0h1m1 0h1m3 0h1m4 0h3M0 22.5h2m1 0h1m1 0h1m2 0h5m1 0h1m1 0h1m2 0h1m4 0h1m2 0h1m4 0h1m1 0h1m2 0h1m3 0h1m4 0h3m2 0h1m2 0h1m4 0h1m2 0h1m1 0h4m4 0h1m3 0h2m3 0h1m1 0h5m2 0h1m1 0h1m1 0h2m1 0h2m1 0h2m1 0h1m5 0h1m3 0h1m1 0h2m2 0h1m3 0h2m1 0h2M1 23.5h3m3 0h2m1 0h1m2 0h1m2 0h1m1 0h2m1 0h2m1 0h1m1 0h2m1 0h1m1 0h2m1 0h1m1 0h6m1 0h2m3 0h1m1 0h1m1 0h4m4 0h2m1 0h1m2 0h2m3 0h2m3 0h1m1 0h1m2 0h1m1 0h1m2 0h2m1 0h1m4 0h3m2 0h5m2 0h1m2 0h1m1 0h1m1 0h2m2 0h1m1 0h2m4 0h2M0 24.5h2m1 0h1m1 0h6m2 0h3m1 0h3m3 0h2m1 0h1m2 0h5m2 0h5m1 0h5m4 0h1m1 0h4m3 0h2m2 0h1m1 0h4m1 0h1m2 0h1m2 0h2m2 0h1m1 0h3m3 0h14m1 0h1m3 0h1m1 0h5m3 0h1m1 0h5M0 25.5h1m2 0h3m1 0h1m1 0h1m1 0h2m1 0h6m2 0h2m1 0h1m4 0h1m1 0h1m2 0h2m1 0h2m1 0h3m1 0h1m1 0h3m5 0h2m1 0h4m1 0h1m5 0h1m1 0h1m1 0h2m1 0h1m1 0h4m2 0h1m2 0h2m2 0h1m2 0h2m1 0h2m1 0h1m2 0h1m1 0h2m2 0h2m1 0h4m1 0h2m7 0h2M0 26.5h2m1 0h1m5 0h1m2 0h2m1 0h1m2 0h1m3 0h1m1 0h7m1 0h1m1 0h4m1 0h3m1 0h4m1 0h4m3 0h3m1 0h1m2 0h1m1 0h2m3 0h1m1 0h1m1 0h1m1 0h4m1 0h2m2 0h3m2 0h2m1 0h1m6 0h1m1 0h2m4 0h3m1 0h2m3 0h1m2 0h1m1 0h2m1 0h4M0 27.5h1m2 0h1m2 0h2m2 0h3m1 0h4m1 0h1m1 0h1m3 0h1m1 0h1m1 0h2m1 0h10m3 0h1m2 0h1m5 0h3m2 0h2m2 0h6m1 0h2m2 0h7m1 0h2m1 0h1m1 0h1m1 0h1m1 0h1m4 0h1m2 0h3m1 0h3m2 0h1m1 0h1m2 0h2m1 0h2m5 0h2m1 0h2M0 28.5h3m1 0h1m1 0h1m1 0h5m2 0h1m2 0h1m1 0h1m1 0h1m5 0h4m1 0h1m3 0h1m1 0h3m2 0h2m1 0h4m2 0h4m3 0h2m1 0h2m1 0h1m1 0h1m1 0h2m1 0h1m1 0h2m2 0h4m3 0h2m1 0h1m3 0h2m1 0h1m2 0h4m3 0h2m4 0h1m2 0h1m1 0h3m1 0h2m2 0h1m1 0h1M0 29.5h1m4 0h6m1 0h2m1 0h1m1 0h2m1 0h1m2 0h3m1 0h2m4 0h1m1 0h1m1 0h1m2 0h1m2 0h1m1 0h2m2 0h6m1 0h1m1 0h1m1 0h3m1 0h1m5 0h1m1 0h1m1 0h2m1 0h1m1 0h3m1 0h1m1 0h1m2 0h1m2 0h1m1 0h2m1 0h2m1 0h1m2 0h1m2 0h1m2 0h2m1 0h4m2 0h1m1 0h4m1 0h3M0 30.5h1m1 0h1m4 0h2m1 0h1m2 0h2m1 0h2m1 0h1m1 0h1m2 0h2m1 0h3m2 0h2m1 0h1m1 0h4m1 0h2m5 0h3m1 0h1m1 0h1m1 0h3m2 0h3m3 0h2m3 0h1m1 0h1m1 0h5m2 0h1m1 0h1m2 0h1m2 0h3m1 0h3m1 0h1m2 0h2m1 0h1m1 0h2m4 0h3m2 0h4m3 0h1M0 31.5h1m2 0h1m1 0h1m1 0h2m1 0h2m1 0h4m3 0h1m3 0h2m1 0h1m1 0h1m1 0h1m1 0h5m3 0h1m2 0h1m3 0h2m2 0h3m1 0h1m5 0h2m1 0h1m1 0h1m4 0h1m3 0h1m2 0h2m2 0h1m5 0h1m3 0h1m4 0h1m4 0h5m2 0h1m4 0h1m2 0h1m2 0h1m1 0h1m1 0h1m1 0h1M0 32.5h2m1 0h2m2 0h9m1 0h2m2 0h1m1 0h5m1 0h1m2 0h2m1 0h2m1 0h1m1 0h4m1 0h1m1 0h1m1 0h1m1 0h1m1 0h2m1 0h2m3 0h3m1 0h2m5 0h2m1 0h1m1 0h3m4 0h5m2 0h3m2 0h1m2 0h1m1 0h3m1 0h1m2 0h1m4 0h4m2 0h3m1 0h5M0 33.5h3m1 0h4m1 0h4m1 0h1m1 0h4m1 0h4m4 0h2m1 0h1m1 0h1m1 0h2m1 0h1m1 0h8m3 0h6m2 0h1m4 0h4m1 0h4m1 0h2m1 0h2m1 0h3m3 0h1m3 0h2m1 0h2m1 0h2m3 0h1m1 0h1m2 0h3m2 0h1m1 0h2m2 0h2m1 0h1m1 0h1m1 0h1m1 0h1M1 34.5h4m1 0h1m1 0h1m1 0h3m1 0h5m1 0h4m1 0h2m1 0h1m2 0h6m5 0h2m3 0h3m2 0h1m5 0h4m1 0h13m1 0h1m4 0h2m5 0h5m1 0h1m3 0h1m1 0h1m4 0h3m2 0h1m4 0h5m1 0h1m3 0h2M1 35.5h11m5 0h5m3 0h1m1 0h9m1 0h1m2 0h1m1 0h2m2 0h4m2 0h6m1 0h3m3 0h11m3 0h3m1 0h1m1 0h5m1 0h1m2 0h4m1 0h3m1 0h2m3 0h10m1 0h4m1 0h1m2 0h1M1 36.5h1m1 0h2m1 0h1m2 0h2m2 0h1m2 0h4m1 0h3m1 0h1m9 0h2m2 0h1m1 0h4m3 0h1m1 0h2m1 0h1m2 0h1m1 0h1m1 0h2m1 0h2m1 0h3m1 0h1m3 0h8m3 0h3m2 0h1m1 0h1m1 0h2m3 0h4m3 0h1m2 0h3m2 0h1m4 0h1m1 0h3m3 0h1M0 37.5h1m1 0h1m1 0h3m1 0h2m1 0h2m2 0h1m2 0h1m2 0h1m2 0h2m1 0h2m4 0h2m2 0h1m2 0h1m4 0h1m2 0h1m1 0h1m2 0h1m1 0h1m1 0h1m1 0h3m1 0h1m1 0h1m2 0h3m4 0h1m4 0h3m1 0h2m1 0h3m1 0h1m1 0h1m1 0h2m3 0h1m1 0h1m1 0h1m2 0h4m1 0h1m2 0h1m2 0h3m2 0h5M2 38.5h1m3 0h1m2 0h1m1 0h3m2 0h2m2 0h1m2 0h1m2 0h1m1 0h1m1 0h9m3 0h1m1 0h3m1 0h2m6 0h1m2 0h1m1 0h1m2 0h1m1 0h2m1 0h1m2 0h11m6 0h1m1 0h4m1 0h1m4 0h6m1 0h1m1 0h6m2 0h1m1 0h2M0 39.5h3m4 0h1m1 0h1m1 0h6m1 0h1m1 0h3m1 0h3m1 0h4m3 0h4m1 0h7m1 0h1m1 0h2m1 0h1m1 0h1m1 0h1m1 0h2m1 0h3m2 0h5m1 0h1m4 0h5m3 0h3m3 0h2m1 0h10m4 0h1m1 0h3m2 0h3m2 0h2m1 0h4M1 40.5h3m2 0h1m1 0h3m2 0h1m6 0h1m2 0h1m1 0h1m1 0h4m4 0h7m1 0h2m2 0h3m1 0h1m5 0h1m1 0h1m1 0h2m1 0h1m1 0h1m11 0h2m2 0h1m1 0h3m1 0h2m3 0h3m1 0h1m2 0h1m1 0h4m1 0h1m1 0h2m2 0h2m1 0h1m2 0h3m1 0h1m1 0h2M0 41.5h4m1 0h5m1 0h1m3 0h2m1 0h2m2 0h2m5 0h1m3 0h2m1 0h3m5 0h1m1 0h1m2 0h1m2 0h2m5 0h1m1 0h1m1 0h1m1 0h1m2 0h2m3 0h3m1 0h1m2 0h3m1 0h1m2 0h2m2 0h5m2 0h1m2 0h2m2 0h2m2 0h1m1 0h2m3 0h1m2 0h1m1 0h1m1 0h1m1 0h2M2 42.5h1m2 0h1m7 0h2m1 0h1m1 0h1m2 0h1m1 0h2m1 0h3m2 0h2m4 0h1m2 0h1m1 0h3m1 0h1m5 0h3m2 0h2m3 0h1m3 0h3m1 0h1m1 0h1m1 0h5m2 0h4m2 0h6m3 0h5m1 0h3m5 0h2m1 0h2m1 0h4m3 0h5M1 43.5h2m1 0h4m3 0h2m1 0h1m2 0h4m4 0h1m1 0h1m2 0h2m1 0h3m2 0h3m2 0h2m1 0h2m2 0h2m1 0h1m3 0h1m4 0h3m2 0h1m1 0h1m1 0h1m3 0h2m1 0h1m2 0h1m1 0h1m1 0h2m2 0h3m2 0h1m3 0h1m1 0h2m1 0h1m3 0h2m1 0h1m1 0h1m1 0h1m3 0h1m2 0h7M0 44.5h4m1 0h4m3 0h1m1 0h3m2 0h1m1 0h1m1 0h1m1 0h5m1 0h1m2 0h2m1 0h3m1 0h2m1 0h3m1 0h2m1 0h4m2 0h4m2 0h3m3 0h3m1 0h1m2 0h1m4 0h6m2 0h1m2 0h1m1 0h1m5 0h1m2 0h1m1 0h2m3 0h6m1 0h3m1 0h2m1 0h1m2 0h1M1 45.5h1m4 0h2m1 0h2m1 0h2m2 0h3m2 0h1m3 0h1m1 0h1m2 0h2m1 0h2m2 0h3m1 0h2m2 0h3m3 0h1m1 0h1m4 0h1m1 0h1m2 0h1m2 0h2m3 0h5m2 0h7m4 0h2m4 0h1m2 0h3m2 0h1m4 0h1m4 0h1m1 0h1m1 0h2m1 0h3m2 0h1M3 46.5h1m2 0h1m1 0h4m1 0h3m1 0h3m1 0h2m1 0h1m1 0h3m2 0h3m1 0h2m2 0h2m1 0h1m1 0h1m4 0h4m1 0h1m5 0h5m5 0h1m2 0h2m1 0h2m4 0h1m3 0h1m1 0h3m1 0h1m1 0h1m1 0h3m1 0h4m2 0h5m1 0h1m1 0h1m2 0h1m3 0h2m1 0h4M0 47.5h2m1 0h1m1 0h2m1 0h1m1 0h5m1 0h1m2 0h1m4 0h1m1 0h2m1 0h3m3 0h1m2 0h2m6 0h11m1 0h1m1 0h2m2 0h1m1 0h3m1 0h8m1 0h2m1 0h1m4 0h1m1 0h1m1 0h1m1 0h3m1 0h1m1 0h2m4 0h1m2 0h1m1 0h1m4 0h1m1 0h2m1 0h1m1 0h1M1 48.5h3m1 0h6m1 0h2m1 0h1m1 0h1m3 0h5m2 0h6m1 0h4m1 0h1m5 0h2m1 0h1m1 0h2m1 0h3m1 0h1m4 0h1m2 0h4m1 0h2m1 0h2m4 0h1m2 0h1m2 0h1m2 0h2m2 0h2m2 0h1m2 0h3m1 0h2m1 0h1m1 0h1m1 0h1m4 0h5m2 0h1M0 49.5h1m3 0h1m6 0h1m3 0h4m1 0h1m2 0h1m3 0h1m1 0h1m3 0h3m4 0h1m3 0h1m1 0h2m1 0h1m3 0h1m4 0h2m3 0h2m1 0h4m2 0h5m1 0h4m1 0h1m2 0h1m1 0h4m1 0h2m2 0h1m2 0h1m3 0h3m2 0h3m2 0h5m1 0h2m1 0h1m2 0h1M1 50.5h1m1 0h3m1 0h3m1 0h4m2 0h1m2 0h2m2 0h6m1 0h2m1 0h1m1 0h1m1 0h1m2 0h1m1 0h1m1 0h1m1 0h1m1 0h1m1 0h1m1 0h2m1 0h1m1 0h2m2 0h2m1 0h1m1 0h3m2 0h5m2 0h2m1 0h1m2 0h1m2 0h1m1 0h1m1 0h3m1 0h1m3 0h2m2 0h1m2 0h1m1 0h3m4 0h2m2 0h2m2 0h3M5 51.5h2m1 0h2m2 0h4m1 0h1m2 0h3m1 0h5m1 0h1m3 0h2m1 0h1m2 0h1m3 0h1m1 0h1m1 0h3m1 0h2m1 0h1m2 0h1m7 0h2m1 0h2m1 0h2m1 0h1m3 0h3m1 0h1m1 0h1m2 0h1m1 0h5m1 0h1m1 0h1m2 0h1m3 0h1m3 0h1m2 0h1m2 0h1m1 0h3m1 0h3m3 0h1M0 52.5h1m4 0h1m1 0h1m1 0h5m2 0h1m2 0h5m1 0h2m4 0h1m2 0h2m1 0h1m1 0h1m1 0h2m1 0h1m1 0h1m1 0h2m3 0h1m4 0h4m1 0h2m2 0h1m5 0h5m1 0h1m1 0h5m1 0h3m1 0h1m1 0h4m2 0h2m1 0h1m1 0h1m1 0h3m5 0h1m1 0h1m1 0h1m1 0h4m3 0h1M0 53.5h2m2 0h1m1 0h4m1 0h2m1 0h1m1 0h1m1 0h3m1 0h4m1 0h5m1 0h2m1 0h2m3 0h1m1 0h1m1 0h1m1 0h2m1 0h1m2 0h4m4 0h1m2 0h1m1 0h1m1 0h1m2 0h1m2 0h1m1 0h1m1 0h3m1 0h3m1 0h1m1 0h5m1 0h1m8 0h1m1 0h2m1 0h2m3 0h2m7 0h1m1 0h1m2 0h1M0 54.5h1m1 0h1m2 0h2m6 0h3m1 0h2m2 0h6m1 0h1m1 0h1m3 0h1m1 0h1m2 0h1m1 0h1m1 0h3m2 0h1m1 0h2m1 0h2m1 0h2m3 0h1m1 0h1m1 0h4m1 0h1m7 0h1m1 0h1m1 0h3m3 0h3m1 0h1m1 0h6m3 0h1m2 0h2m3 0h1m1 0h3m2 0h5m1 0h1m1 0h1M1 55.5h1m1 0h1m1 0h1m2 0h3m1 0h4m1 0h3m3 0h3m1 0h8m1 0h1m1 0h2m2 0h1m1 0h1m1 0h2m3 0h5m1 0h1m5 0h2m1 0h1m1 0h1m2 0h2m3 0h2m3 0h3m4 0h3m3 0h5m1 0h6m1 0h1m1 0h2m1 0h2m1 0h1m1 0h8m1 0h1M3 56.5h2m1 0h5m1 0h2m1 0h2m2 0h1m1 0h3m1 0h1m2 0h3m2 0h1m1 0h1m1 0h1m2 0h2m1 0h2m1 0h4m2 0h2m1 0h3m1 0h10m1 0h2m1 0h2m1 0h1m1 0h1m1 0h1m3 0h6m1 0h1m3 0h1m1 0h1m1 0h1m1 0h3m1 0h1m2 0h2m2 0h1m1 0h6m1 0h1m2 0h1m2 0h1M1 57.5h1m3 0h2m1 0h1m2 0h4m1 0h2m2 0h2m3 0h2m3 0h5m2 0h3m1 0h1m2 0h4m2 0h1m1 0h2m1 0h2m1 0h1m1 0h3m1 0h1m1 0h1m2 0h2m1 0h1m1 0h2m4 0h1m4 0h1m1 0h1m1 0h3m1 0h1m2 0h6m3 0h2m1 0h2m2 0h4m1 0h3M1 58.5h2m2 0h3m2 0h4m8 0h1m4 0h4m1 0h1m2 0h2m2 0h3m5 0h1m1 0h2m3 0h1m2 0h2m1 0h1m5 0h2m1 0h1m1 0h2m1 0h1m3 0h3m1 0h3m1 0h3m1 0h3m2 0h3m1 0h1m2 0h2m1 0h1m1 0h2m1 0h2m1 0h1m1 0h1m1 0h1m1 0h4m1 0h2M0 59.5h2m1 0h1m1 0h1m3 0h2m2 0h1m1 0h2m2 0h1m1 0h3m1 0h2m4 0h2m3 0h4m1 0h4m2 0h2m1 0h2m1 0h1m2 0h2m2 0h3m3 0h2m1 0h1m3 0h2m1 0h2m4 0h1m1 0h1m2 0h1m2 0h4m2 0h1m1 0h1m4 0h1m1 0h1m1 0h3m1 0h2m1 0h1m1 0h2m2 0h1m1 0h1m1 0h4M0 60.5h7m2 0h2m1 0h1m1 0h3m5 0h2m1 0h2m1 0h1m1 0h1m1 0h6m1 0h1m1 0h2m1 0h1m2 0h2m1 0h1m1 0h1m3 0h1m1 0h1m2 0h2m1 0h1m1 0h1m1 0h1m1 0h1m1 0h3m1 0h1m1 0h5m2 0h3m2 0h1m3 0h1m3 0h1m2 0h1m1 0h1m4 0h1m1 0h1m4 0h1m2 0h3m1 0h2m2 0h1M0 61.5h9m1 0h1m1 0h1m5 0h1m3 0h7m2 0h1m1 0h1m1 0h1m2 0h1m1 0h2m2 0h6m1 0h2m2 0h1m1 0h2m3 0h1m5 0h1m1 0h1m1 0h2m2 0h1m1 0h2m4 0h2m1 0h3m1 0h7m1 0h2m2 0h3m1 0h2m1 0h1m1 0h3m2 0h3m1 0h4m1 0h2M3 62.5h1m1 0h4m1 0h3m1 0h1m1 0h2m1 0h2m1 0h9m2 0h2m1 0h4m1 0h5m2 0h1m3 0h2m1 0h2m1 0h2m2 0h1m3 0h1m1 0h1m4 0h1m2 0h1m4 0h3m1 0h2m2 0h7m2 0h2m3 0h2m1 0h4m1 0h1m3 0h1m1 0h1m1 0h1m1 0h4m1 0h2M2 63.5h2m1 0h5m3 0h2m1 0h2m2 0h1m1 0h1m2 0h2m1 0h2m1 0h1m1 0h1m2 0h1m1 0h3m1 0h1m1 0h5m5 0h3m1 0h3m2 0h6m2 0h4m1 0h1m3 0h1m5 0h5m1 0h3m2 0h1m1 0h1m1 0h2m1 0h1m1 0h7m1 0h2m2 0h1m3 0h1m1 0h3M0 64.5h2m4 0h1m1 0h1m1 0h1m1 0h1m5 0h1m3 0h2m2 0h2m1 0h3m1 0h2m2 0h3m2 0h6m1 0h3m5 0h1m1 0h2m2 0h1m1 0h6m1 0h1m2 0h1m1 0h1m2 0h1m1 0h1m2 0h5m1 0h1m2 0h2m1 0h1m1 0h5m1 0h1m4 0h5m9 0h1m1 0h2M0 65.5h2m1 0h3m1 0h1m3 0h1m3 0h1m1 0h2m1 0h3m2 0h3m1 0h1m1 0h5m2 0h3m2 0h5m1 0h1m2 0h1m1 0h3m6 0h1m1 0h1m1 0h1m1 0h1m2 0h1m2 0h6m1 0h2m4 0h3m2 0h6m1 0h3m1 0h1m2 0h1m3 0h1m2 0h2m3 0h7M0 66.5h1m1 0h2m2 0h10m1 0h1m3 0h2m2 0h2m1 0h2m1 0h3m1 0h2m1 0h6m1 0h2m1 0h1m1 0h2m1 0h2m2 0h2m2 0h2m1 0h3m7 0h1m1 0h1m2 0h2m3 0h2m1 0h1m3 0h2m2 0h2m7 0h4m1 0h2m2 0h2m4 0h1m2 0h1m1 0h4M2 67.5h2m2 0h2m5 0h1m1 0h1m1 0h9m1 0h3m1 0h2m5 0h1m1 0h3m1 0h1m2 0h4m1 0h1m2 0h3m1 0h3m2 0h1m2 0h2m4 0h2m1 0h2m1 0h5m1 0h3m1 0h1m2 0h2m2 0h1m3 0h1m1 0h1m1 0h1m2 0h1m3 0h2m1 0h5m3 0h2m1 0h3M1 68.5h1m1 0h1m2 0h1m2 0h1m1 0h1m2 0h5m1 0h4m1 0h3m5 0h2m1 0h1m1 0h3m1 0h1m3 0h3m2 0h1m2 0h1m1 0h4m1 0h1m2 0h1m5 0h1m1 0h1m1 0h2m1 0h1m5 0h1m1 0h1m2 0h3m5 0h3m3 0h2m2 0h1m1 0h2m1 0h1m3 0h1m3 0h1m1 0h3m1 0h2M1 69.5h1m2 0h1m1 0h2m1 0h2m1 0h1m1 0h1m2 0h1m1 0h1m2 0h2m1 0h1m3 0h1m1 0h4m2 0h1m1 0h2m2 0h1m1 0h1m2 0h2m2 0h3m1 0h1m3 0h1m2 0h2m1 0h1m3 0h3m1 0h5m2 0h2m1 0h1m1 0h2m1 0h2m1 0h2m1 0h3m1 0h7m1 0h2m1 0h3m1 0h1m2 0h1m1 0h3m1 0h1m1 0h2M0 70.5h1m2 0h1m5 0h1m1 0h1m3 0h5m2 0h1m3 0h5m1 0h4m3 0h1m1 0h2m1 0h1m2 0h1m1 0h1m1 0h1m1 0h1m1 0h2m1 0h3m2 0h8m1 0h1m2 0h1m4 0h1m2 0h1m2 0h4m1 0h3m1 0h2m2 0h1m1 0h1m1 0h2m1 0h1m1 0h2m2 0h2m1 0h4m3 0h4M0 71.5h1m2 0h2m5 0h2m1 0h2m1 0h1m1 0h2m1 0h2m1 0h1m3 0h1m1 0h3m2 0h1m2 0h1m1 0h4m1 0h2m1 0h1m2 0h4m1 0h1m1 0h4m2 0h5m3 0h2m1 0h5m3 0h1m2 0h2m3 0h2m1 0h3m3 0h2m2 0h2m1 0h1m1 0h4m2 0h4m1 0h1m1 0h1m2 0h2M0 72.5h1m1 0h2m2 0h1m2 0h1m1 0h2m3 0h6m3 0h1m1 0h2m3 0h1m1 0h1m1 0h1m1 0h1m2 0h4m1 0h2m1 0h1m1 0h1m1 0h3m1 0h1m1 0h3m1 0h1m3 0h4m1 0h2m1 0h1m2 0h4m1 0h1m1 0h2m2 0h1m1 0h3m1 0h3m5 0h1m4 0h3m1 0h1m1 0h1m2 0h2m2 0h1m1 0h2m2 0h1M0 73.5h3m1 0h1m1 0h1m1 0h1m1 0h2m2 0h1m1 0h2m1 0h1m1 0h3m4 0h2m3 0h1m1 0h1m1 0h1m2 0h1m3 0h1m1 0h3m2 0h4m4 0h1m2 0h4m2 0h2m2 0h1m2 0h1m2 0h1m1 0h3m3 0h1m2 0h1m1 0h1m1 0h4m1 0h2m1 0h2m1 0h1m1 0h2m2 0h2m1 0h4m2 0h1m4 0h4M0 74.5h2m1 0h1m2 0h1m1 0h2m1 0h1m2 0h1m1 0h2m7 0h2m3 0h3m3 0h1m3 0h4m1 0h1m2 0h4m3 0h3m1 0h1m1 0h6m3 0h2m4 0h3m1 0h1m3 0h5m1 0h1m1 0h1m4 0h3m1 0h2m1 0h2m2 0h2m2 0h3m1 0h3m3 0h3m2 0h1M2 75.5h1m1 0h2m1 0h3m3 0h3m1 0h1m3 0h5m3 0h4m1 0h2m1 0h2m3 0h1m3 0h1m1 0h6m1 0h1m1 0h1m4 0h5m1 0h2m1 0h1m1 0h2m1 0h1m1 0h6m1 0h4m1 0h1m2 0h1m3 0h2m5 0h1m1 0h2m1 0h1m2 0h1m3 0h1m1 0h3m2 0h1m3 0h1M0 76.5h1m1 0h3m1 0h1m1 0h1m4 0h3m2 0h2m1 0h1m1 0h2m2 0h2m1 0h1m1 0h4m1 0h1m5 0h5m1 0h1m2 0h1m1 0h1m5 0h1m9 0h2m1 0h3m1 0h2m1 0h1m1 0h4m3 0h1m3 0h3m1 0h1m2 0h3m1 0h4m1 0h1m3 0h1m1 0h4m2 0h7M0 77.5h2m1 0h2m2 0h1m2 0h5m3 0h2m1 0h1m1 0h1m1 0h2m2 0h3m5 0h1m5 0h4m1 0h1m1 0h6m1 0h2m1 0h1m1 0h2m1 0h1m2 0h1m1 0h1m1 0h1m1 0h8m1 0h1m4 0h11m1 0h2m2 0h5m1 0h3m1 0h1m1 0h1m1 0h1m3 0h2m1 0h1M2 78.5h8m1 0h1m1 0h1m2 0h6m2 0h3m1 0h1m1 0h2m1 0h1m3 0h1m2 0h4m4 0h1m6 0h1m2 0h7m1 0h3m2 0h1m1 0h4m3 0h1m2 0h3m3 0h4m2 0h2m1 0h2m1 0h3m1 0h1m1 0h1m1 0h1m2 0h3m1 0h3m4 0h1m1 0h3M0 79.5h1m3 0h3m2 0h2m1 0h1m1 0h1m2 0h1m1 0h2m1 0h1m2 0h4m2 0h2m3 0h1m2 0h5m1 0h2m2 0h1m2 0h1m4 0h2m4 0h2m1 0h1m1 0h1m1 0h1m1 0h1m4 0h1m2 0h2m2 0h2m5 0h2m1 0h1m2 0h1m1 0h3m2 0h2m1 0h3m3 0h1m1 0h2m2 0h1m2 0h3m1 0h2M0 80.5h1m2 0h1m2 0h1m1 0h4m1 0h1m2 0h1m1 0h5m1 0h2m2 0h2m1 0h1m1 0h2m1 0h2m1 0h1m2 0h1m3 0h4m2 0h1m3 0h7m1 0h4m4 0h1m1 0h1m2 0h4m2 0h2m1 0h2m1 0h1m1 0h1m1 0h1m4 0h2m3 0h10m1 0h2m2 0h1m1 0h3m1 0h2m1 0h1M0 81.5h1m1 0h1m1 0h2m1 0h1m1 0h2m2 0h5m3 0h1m1 0h1m1 0h4m1 0h2m1 0h4m2 0h1m1 0h1m1 0h1m3 0h1m4 0h2m1 0h3m3 0h1m1 0h1m3 0h1m3 0h2m1 0h1m4 0h1m1 0h2m2 0h1m1 0h1m1 0h2m1 0h2m3 0h3m1 0h2m1 0h1m1 0h1m1 0h4m1 0h1m1 0h1m1 0h6M4 82.5h1m2 0h1m1 0h5m1 0h1m2 0h2m2 0h2m2 0h2m2 0h1m1 0h2m2 0h2m2 0h2m1 0h1m1 0h2m2 0h1m1 0h2m2 0h2m1 0h2m1 0h2m1 0h2m1 0h1m4 0h1m1 0h5m2 0h2m1 0h1m1 0h1m1 0h2m2 0h2m2 0h1m1 0h1m2 0h3m1 0h4m1 0h1m2 0h2m8 0h1m1 0h1m1 0h1M0 83.5h1m1 0h2m4 0h2m3 0h3m2 0h1m1 0h2m1 0h2m2 0h1m1 0h1m1 0h1m1 0h11m3 0h1m4 0h1m1 0h2m2 0h4m2 0h1m1 0h2m1 0h5m1 0h1m1 0h1m1 0h3m1 0h1m1 0h1m1 0h1m2 0h4m2 0h2m4 0h2m2 0h4m1 0h1m1 0h1m4 0h5m1 0h4M1 84.5h5m1 0h2m1 0h2m1 0h4m4 0h3m3 0h5m4 0h1m1 0h1m2 0h2m1 0h1m2 0h2m1 0h2m2 0h2m1 0h1m1 0h2m1 0h1m1 0h1m1 0h1m1 0h1m1 0h9m1 0h1m1 0h2m2 0h8m1 0h1m1 0h3m2 0h1m1 0h1m7 0h2m1 0h2m5 0h1m1 0h1M2 85.5h3m3 0h2m1 0h2m3 0h2m3 0h5m3 0h2m1 0h2m1 0h5m1 0h1m4 0h2m8 0h2m5 0h1m1 0h1m3 0h1m1 0h1m3 0h2m3 0h1m1 0h1m1 0h1m1 0h1m1 0h2m1 0h1m3 0h1m4 0h1m2 0h3m1 0h1m2 0h5m1 0h2m1 0h2m2 0h1m1 0h1m1 0h1M1 86.5h1m1 0h2m1 0h1m1 0h1m3 0h3m1 0h1m1 0h1m1 0h2m2 0h1m4 0h5m1 0h1m2 0h5m3 0h1m5 0h1m2 0h2m3 0h4m1 0h1m1 0h6m6 0h1m2 0h1m1 0h2m3 0h7m1 0h2m1 0h1m2 0h1m2 0h2m2 0h4m3 0h1m2 0h1m3 0h1m1 0h2M1 87.5h6m1 0h1m2 0h5m2 0h1m1 0h1m1 0h2m1 0h3m1 0h2m1 0h2m4 0h5m1 0h1m2 0h1m1 0h1m1 0h1m1 0h1m1 0h1m9 0h1m2 0h2m1 0h6m1 0h4m1 0h1m2 0h1m3 0h2m1 0h1m3 0h2m7 0h1m1 0h2m1 0h1m4 0h3m1 0h8M0 88.5h1m1 0h2m3 0h1m1 0h2m2 0h3m1 0h1m3 0h1m2 0h1m2 0h2m1 0h3m2 0h2m5 0h20m1 0h1m1 0h2m3 0h1m1 0h1m2 0h1m1 0h1m1 0h5m1 0h2m2 0h3m4 0h1m1 0h3m1 0h5m2 0h1m2 0h3m3 0h2m2 0h6M1 89.5h1m2 0h1m1 0h3m1 0h1m1 0h2m1 0h1m1 0h2m3 0h13m3 0h2m1 0h2m1 0h1m2 0h1m1 0h2m2 0h2m1 0h1m4 0h2m3 0h1m1 0h2m1 0h1m1 0h2m8 0h2m3 0h1m1 0h1m1 0h5m1 0h2m2 0h4m1 0h1m4 0h2m1 0h1m1 0h1m1 0h2m1 0h1m1 0h1m2 0h1M0 90.5h2m2 0h1m3 0h1m1 0h2m1 0h2m1 0h3m2 0h2m1 0h1m4 0h1m1 0h1m3 0h1m2 0h4m1 0h1m1 0h2m1 0h3m1 0h1m1 0h1m2 0h1m3 0h1m1 0h1m1 0h4m1 0h1m1 0h4m2 0h1m4 0h1m2 0h1m3 0h2m2 0h1m2 0h2m2 0h1m2 0h1m1 0h9m3 0h1m4 0h3m1 0h1M0 91.5h2m1 0h1m1 0h1m2 0h2m1 0h3m4 0h2m6 0h3m1 0h2m1 0h1m6 0h1m1 0h1m1 0h1m1 0h1m1 0h3m2 0h2m2 0h2m1 0h1m2 0h2m2 0h1m1 0h2m1 0h1m1 0h1m1 0h2m2 0h1m1 0h4m1 0h3m1 0h2m1 0h1m1 0h3m1 0h1m3 0h2m4 0h4m2 0h3m1 0h1m2 0h2m1 0h1M1 92.5h9m1 0h1m1 0h1m3 0h1m2 0h1m1 0h2m3 0h5m2 0h4m2 0h1m1 0h2m2 0h1m2 0h1m1 0h1m2 0h1m1 0h1m2 0h5m1 0h1m2 0h5m6 0h1m2 0h1m1 0h3m2 0h1m2 0h1m3 0h1m2 0h2m2 0h6m6 0h6m2 0h2m1 0h2M2 93.5h1m2 0h1m2 0h2m3 0h2m1 0h1m1 0h1m2 0h3m2 0h1m1 0h1m1 0h2m1 0h3m2 0h1m1 0h2m1 0h4m1 0h2m2 0h1m2 0h7m2 0h1m2 0h3m2 0h1m1 0h1m1 0h1m1 0h1m2 0h8m5 0h4m1 0h2m3 0h5m2 0h1m3 0h1m1 0h4m4 0h1M1 94.5h3m2 0h1m4 0h2m1 0h1m2 0h1m1 0h2m1 0h5m1 0h3m1 0h4m2 0h8m3 0h2m1 0h2m1 0h3m9 0h1m2 0h6m1 0h1m1 0h1m2 0h2m2 0h4m1 0h1m2 0h1m1 0h1m3 0h1m1 0h1m3 0h2m2 0h1m7 0h1m1 0h1m1 0h2m1 0h3M0 95.5h3m3 0h3m1 0h1m2 0h1m1 0h1m1 0h3m1 0h2m1 0h2m5 0h1m2 0h4m1 0h1m1 0h2m2 0h1m2 0h1m2 0h1m1 0h1m4 0h3m2 0h1m3 0h1m1 0h4m2 0h3m1 0h3m4 0h2m1 0h1m1 0h3m5 0h1m1 0h4m1 0h1m1 0h5m2 0h4m2 0h1m4 0h2M0 96.5h1m2 0h2m1 0h3m1 0h2m1 0h5m2 0h1m2 0h1m1 0h2m1 0h1m4 0h5m2 0h4m2 0h2m9 0h2m1 0h2m1 0h1m1 0h1m2 0h1m2 0h1m1 0h4m1 0h1m1 0h2m3 0h4m1 0h2m1 0h5m1 0h4m3 0h3m1 0h1m1 0h6m1 0h2m1 0h4M5 97.5h4m3 0h1m2 0h1m2 0h7m2 0h2m1 0h1m1 0h1m1 0h1m2 0h1m1 0h1m4 0h2m2 0h1m1 0h1m1 0h3m4 0h2m2 0h2m1 0h1m1 0h1m1 0h1m1 0h3m1 0h2m2 0h1m1 0h1m1 0h1m3 0h1m1 0h1m2 0h3m5 0h1m2 0h1m3 0h2m2 0h1m3 0h6m1 0h1m1 0h1m1 0h1M0 98.5h1m1 0h1m1 0h2m2 0h4m1 0h6m2 0h1m1 0h4m2 0h2m1 0h1m1 0h3m3 0h2m1 0h2m2 0h1m1 0h3m2 0h3m4 0h2m1 0h2m3 0h1m1 0h1m2 0h3m3 0h2m2 0h1m2 0h4m1 0h1m2 0h1m1 0h3m4 0h5m1 0h5m1 0h2m1 0h1m1 0h1m2 0h3M0 99.5h1m1 0h3m1 0h2m3 0h1m2 0h2m2 0h1m2 0h4m2 0h1m1 0h1m1 0h2m1 0h1m1 0h1m3 0h3m1 0h3m3 0h1m2 0h2m1 0h2m1 0h1m2 0h5m3 0h1m1 0h1m1 0h1m1 0h1m1 0h2m1 0h1m2 0h1m4 0h8m1 0h1m1 0h1m1 0h1m1 0h1m1 0h4m1 0h1m2 0h4m1 0h1m1 0h3m2 0h2M0 100.5h2m1 0h3m1 0h1m2 0h3m2 0h1m3 0h1m1 0h2m1 0h1m1 0h4m3 0h2m1 0h1m1 0h1m1 0h4m1 0h3m2 0h1m1 0h1m1 0h1m1 0h1m1 0h2m2 0h2m1 0h1m4 0h5m1 0h4m1 0h1m1 0h2m1 0h2m1 0h4m2 0h6m1 0h2m3 0h2m3 0h1m1 0h2m3 0h5m2 0h1M5 101.5h4m4 0h3m1 0h2m1 0h4m2 0h3m1 0h2m1 0h5m2 0h3m1 0h3m5 0h2m1 0h5m1 0h2m1 0h3m1 0h1m1 0h1m1 0h1m1 0h1m2 0h1m1 0h2m3 0h1m2 0h4m1 0h1m1 0h1m5 0h2m1 0h1m1 0h1m1 0h4m3 0h3m4 0h1m1 0h3M1 102.5h1m1 0h2m1 0h1m1 0h1m2 0h2m2 0h2m1 0h1m1 0h2m1 0h1m1 0h1m2 0h2m1 0h2m2 0h1m2 0h1m2 0h1m1 0h3m1 0h4m1 0h1m1 0h3m1 0h1m1 0h3m1 0h4m2 0h1m2 0h1m2 0h1m1 0h3m2 0h3m1 0h2m1 0h1m2 0h2m1 0h1m3 0h4m2 0h1m1 0h2m1 0h3m2 0h1m1 0h1m2 0h6M1 103.5h2m1 0h4m1 0h1m2 0h4m1 0h2m1 0h1m1 0h1m1 0h1m1 0h7m1 0h2m1 0h1m2 0h3m1 0h3m1 0h4m1 0h1m1 0h2m3 0h2m1 0h6m1 0h3m2 0h1m4 0h2m1 0h3m2 0h3m4 0h2m1 0h1m4 0h1m1 0h1m1 0h1m2 0h2m1 0h1m2 0h1m4 0h4m1 0h2M1 104.5h1m1 0h5m2 0h1m1 0h1m1 0h2m1 0h3m5 0h1m1 0h2m1 0h1m1 0h1m1 0h2m1 0h1m2 0h2m1 0h2m1 0h1m3 0h1m6 0h4m2 0h3m1 0h2m2 0h1m1 0h1m1 0h1m3 0h1m4 0h2m1 0h3m3 0h3m1 0h2m1 0h1m2 0h3m1 0h2m3 0h1m1 0h1m5 0h2m1 0h4M1 105.5h4m1 0h5m4 0h2m1 0h2m1 0h1m2 0h7m3 0h6m3 0h2m1 0h1m1 0h2m1 0h2m2 0h2m7 0h4m1 0h1m1 0h1m2 0h4m1 0h1m1 0h2m1 0h5m3 0h1m1 0h1m2 0h2m1 0h2m1 0h1m1 0h2m1 0h3m3 0h2m1 0h2m2 0h1m1 0h1m1 0h2M1 106.5h1m3 0h2m3 0h7m5 0h10m3 0h1m2 0h4m1 0h1m1 0h2m1 0h2m1 0h2m2 0h7m6 0h4m1 0h3m4 0h3m2 0h2m1 0h3m4 0h3m1 0h1m1 0h1m1 0h1m2 0h4m1 0h1m1 0h1m4 0h2m1 0h3m1 0h3M0 107.5h1m1 0h3m1 0h4m1 0h2m2 0h1m2 0h1m1 0h1m1 0h2m1 0h7m1 0h1m2 0h4m1 0h2m1 0h1m3 0h1m1 0h3m1 0h2m5 0h1m3 0h1m1 0h1m1 0h1m5 0h1m1 0h1m2 0h1m1 0h1m2 0h4m1 0h1m1 0h3m1 0h1m3 0h2m2 0h5m2 0h3m1 0h1m2 0h3m1 0h5M1 108.5h1m1 0h1m1 0h1m1 0h1m1 0h1m1 0h3m1 0h1m1 0h3m4 0h2m3 0h1m1 0h2m4 0h1m3 0h3m2 0h8m2 0h3m2 0h2m1 0h1m2 0h3m3 0h1m1 0h3m2 0h2m3 0h5m2 0h2m1 0h4m1 0h2m1 0h3m1 0h1m1 0h1m4 0h4m1 0h1m4 0h4M0 109.5h2m4 0h2m4 0h1m2 0h1m1 0h1m3 0h1m1 0h2m2 0h1m2 0h2m1 0h1m2 0h1m3 0h2m1 0h1m1 0h1m1 0h1m2 0h3m2 0h1m1 0h1m1 0h1m1 0h1m2 0h5m2 0h1m1 0h2m1 0h1m3 0h6m3 0h1m1 0h2m1 0h2m2 0h3m2 0h1m2 0h3m2 0h1m5 0h6m1 0h1m1 0h2M0 110.5h2m5 0h1m1 0h3m1 0h1m2 0h1m3 0h3m1 0h1m2 0h1m2 0h1m1 0h3m4 0h1m1 0h2m1 0h3m2 0h2m2 0h2m3 0h3m3 0h2m1 0h2m1 0h4m1 0h1m2 0h3m3 0h2m1 0h1m1 0h1m1 0h3m2 0h4m5 0h3m1 0h1m1 0h1m2 0h1m1 0h1m1 0h2m1 0h2m1 0h2m1 0h1M1 111.5h2m1 0h3m1 0h4m1 0h4m1 0h5m1 0h3m1 0h3m6 0h3m1 0h2m1 0h3m1 0h1m3 0h2m1 0h2m3 0h4m2 0h4m1 0h2m1 0h3m1 0h11m1 0h2m2 0h1m1 0h2m2 0h2m3 0h1m1 0h3m1 0h1m2 0h1m6 0h1m1 0h1m1 0h1m1 0h1M0 112.5h3m3 0h1m2 0h7m1 0h1m3 0h1m1 0h3m1 0h2m1 0h1m1 0h5m1 0h2m1 0h3m1 0h4m5 0h4m3 0h2m1 0h1m2 0h1m1 0h1m2 0h1m1 0h4m4 0h1m2 0h4m1 0h1m1 0h2m6 0h2m1 0h4m2 0h3m1 0h3m1 0h2m2 0h1m5 0h1M5 113.5h1m5 0h1m1 0h1m1 0h1m1 0h1m2 0h5m7 0h1m2 0h1m1 0h3m1 0h1m1 0h1m1 0h1m1 0h4m1 0h2m4 0h1m1 0h2m1 0h1m2 0h3m2 0h2m3 0h1m2 0h1m3 0h5m1 0h1m1 0h7m2 0h3m1 0h1m1 0h1m1 0h1m2 0h2m2 0h6m2 0h1m1 0h2M0 114.5h1m3 0h1m2 0h1m1 0h2m1 0h7m1 0h1m1 0h3m2 0h4m1 0h1m4 0h4m2 0h5m3 0h2m1 0h1m5 0h3m1 0h3m1 0h1m2 0h9m3 0h1m1 0h2m4 0h1m2 0h1m3 0h1m2 0h2m1 0h2m1 0h1m1 0h2m2 0h1m2 0h1m6 0h1m2 0h1M0 115.5h1m1 0h2m2 0h1m1 0h3m3 0h2m4 0h1m1 0h1m1 0h1m1 0h1m1 0h4m1 0h2m1 0h1m1 0h5m2 0h1m2 0h3m2 0h2m3 0h1m2 0h1m2 0h1m1 0h2m1 0h1m1 0h3m1 0h2m2 0h3m4 0h2m2 0h2m2 0h1m1 0h3m1 0h6m4 0h1m1 0h1m1 0h1m1 0h2m1 0h1m4 0h4M0 116.5h1m2 0h3m1 0h1m3 0h3m2 0h2m1 0h2m2 0h5m1 0h1m3 0h3m1 0h1m1 0h2m1 0h1m2 0h1m1 0h1m2 0h3m1 0h2m1 0h1m1 0h1m2 0h5m2 0h2m1 0h3m2 0h3m1 0h1m1 0h1m4 0h1m3 0h1m2 0h1m1 0h1m4 0h2m4 0h3m1 0h1m2 0h13M0 117.5h1m5 0h2m2 0h6m1 0h3m2 0h4m3 0h3m1 0h1m1 0h2m1 0h4m1 0h5m3 0h2m2 0h1m1 0h3m1 0h1m1 0h2m4 0h2m4 0h4m2 0h1m1 0h2m1 0h3m2 0h6m1 0h1m1 0h6m1 0h5m1 0h1m2 0h2m3 0h3m1 0h1M2 118.5h1m2 0h2m2 0h3m1 0h3m2 0h1m2 0h3m1 0h2m1 0h2m1 0h1m3 0h2m4 0h2m1 0h1m1 0h5m5 0h2m3 0h1m2 0h1m1 0h1m4 0h1m2 0h1m5 0h1m1 0h1m1 0h2m2 0h1m4 0h2m1 0h3m5 0h1m1 0h1m2 0h6m2 0h1m1 0h1m3 0h3M3 119.5h1m1 0h3m1 0h2m2 0h1m1 0h1m9 0h1m3 0h1m1 0h1m1 0h2m1 0h6m4 0h3m2 0h6m2 0h3m2 0h6m4 0h1m1 0h1m1 0h5m3 0h1m2 0h1m1 0h4m3 0h1m1 0h3m4 0h2m2 0h2m1 0h2m1 0h1m1 0h5m2 0h1M0 120.5h3m3 0h5m1 0h2m2 0h1m1 0h1m5 0h1m2 0h2m1 0h6m3 0h1m1 0h1m1 0h2m1 0h3m1 0h1m2 0h1m1 0h1m1 0h1m1 0h1m3 0h5m1 0h1m2 0h5m2 0h3m3 0h1m1 0h3m1 0h4m2 0h2m1 0h3m1 0h3m8 0h1m1 0h1m2 0h1m1 0h4m1 0h1M0 121.5h5m1 0h2m1 0h2m1 0h2m1 0h1m1 0h4m4 0h1m3 0h3m1 0h1m4 0h4m1 0h2m3 0h3m3 0h5m1 0h5m2 0h1m3 0h4m2 0h3m2 0h2m2 0h1m3 0h7m4 0h3m5 0h4m1 0h3m1 0h3m1 0h1m1 0h2M3 122.5h1m1 0h1m2 0h2m1 0h1m3 0h1m1 0h1m1 0h1m4 0h2m2 0h3m2 0h3m4 0h1m1 0h4m1 0h2m2 0h1m1 0h1m2 0h1m1 0h1m1 0h2m3 0h4m1 0h2m1 0h1m2 0h2m2 0h2m1 0h2m2 0h1m2 0h1m1 0h2m1 0h5m2 0h1m2 0h3m2 0h1m1 0h1m2 0h1m1 0h3m1 0h1m5 0h1M0 123.5h2m2 0h6m1 0h2m1 0h3m3 0h2m1 0h3m3 0h2m1 0h2m3 0h2m1 0h2m1 0h1m1 0h1m1 0h1m4 0h4m2 0h1m2 0h3m2 0h3m1 0h1m1 0h3m2 0h3m3 0h1m1 0h2m1 0h2m1 0h1m1 0h2m2 0h1m1 0h3m4 0h4m1 0h1m1 0h1m1 0h2m1 0h1m3 0h1m3 0h1M1 124.5h3m2 0h2m5 0h1m5 0h2m1 0h1m1 0h2m1 0h1m2 0h6m3 0h3m2 0h3m4 0h1m2 0h1m1 0h2m1 0h3m1 0h1m1 0h4m1 0h1m2 0h1m2 0h7m1 0h6m1 0h2m1 0h4m1 0h2m3 0h4m2 0h1m6 0h6M0 125.5h1m1 0h1m1 0h1m1 0h1m1 0h2m1 0h3m2 0h1m2 0h3m4 0h2m1 0h7m1 0h6m1 0h1m1 0h3m1 0h2m1 0h1m2 0h3m2 0h1m4 0h2m1 0h1m1 0h1m2 0h1m1 0h1m1 0h1m2 0h1m2 0h1m1 0h1m2 0h1m2 0h1m1 0h4m2 0h9m2 0h1m3 0h2m3 0h1m2 0h2m1 0h1M0 126.5h3m2 0h1m1 0h1m2 0h1m2 0h4m2 0h1m4 0h1m4 0h4m1 0h3m1 0h1m2 0h2m2 0h1m1 0h2m4 0h1m2 0h3m4 0h1m5 0h1m1 0h3m3 0h1m1 0h2m1 0h3m1 0h3m4 0h2m1 0h9m1 0h2m2 0h2m2 0h1m3 0h3m1 0h1m1 0h4M1 127.5h1m1 0h2m1 0h1m5 0h2m3 0h2m1 0h2m1 0h3m1 0h2m1 0h1m2 0h3m2 0h4m2 0h1m1 0h2m1 0h1m1 0h1m1 0h2m1 0h2m1 0h2m1 0h3m1 0h4m1 0h2m1 0h1m2 0h2m2 0h2m1 0h1m1 0h4m2 0h2m7 0h1m1 0h4m4 0h1m3 0h4m2 0h1m5 0h1"/></pattern>
      <pattern id="py" width="64" height="64" patternUnits="userSpaceOnUse"><path stroke="#ff0" stroke-width="1" fill="none" d="M2 .5h2m3 0h7m3 0h8m1 0h7m2 0h1m6 0h1m2 0h1m2 0h3m1 0h1m1 0h1m2 0h2m2 0h3M1 1.5h1m1 0h1m1 0h1m2 0h7m1 0h2m3 0h1m1 0h4m1 0h2m1 0h2m1 0h1m1 0h3m1 0h1m1 0h1m1 0h2m1 0h2m1 0h2m1 0h4m1 0h4M4 2.5h2m1 0h3m1 0h5m1 0h12m3 0h5m2 0h7m1 0h10m3 0h4M0 3.5h4m1 0h2m1 0h2m1 0h2m1 0h2m2 0h9m1 0h1m1 0h4m1 0h4m1 0h1m2 0h2m2 0h3m1 0h3m4 0h5M1 4.5h1m1 0h2m1 0h4m2 0h4m2 0h4m2 0h2m1 0h1m1 0h1m1 0h1m2 0h5m1 0h4m3 0h1m1 0h1m1 0h1m2 0h3m2 0h3M0 5.5h1m1 0h1m2 0h1m2 0h1m2 0h1m1 0h2m1 0h7m1 0h3m1 0h1m1 0h1m1 0h5m1 0h1m2 0h1m3 0h7m1 0h4m1 0h4m1 0h1M1 6.5h2m1 0h2m1 0h4m2 0h6m1 0h1m1 0h8m2 0h2m1 0h4m1 0h2m1 0h1m1 0h2m1 0h1m2 0h1m8 0h2m1 0h1M0 7.5h2m1 0h2m1 0h1m1 0h4m3 0h3m1 0h5m1 0h12m1 0h2m1 0h1m1 0h2m1 0h1m1 0h2m1 0h4m1 0h3m3 0h2M0 8.5h3m1 0h1m3 0h2m1 0h5m1 0h1m1 0h2m1 0h7m2 0h1m2 0h10m3 0h1m1 0h2m1 0h7m2 0h3M2 9.5h1m2 0h8m2 0h2m3 0h7m3 0h3m2 0h1m1 0h3m1 0h3m1 0h1m1 0h5m1 0h1m3 0h7M0 10.5h6m1 0h3m2 0h2m1 0h2m1 0h4m1 0h3m1 0h8m1 0h2m2 0h2m2 0h1m2 0h1m1 0h4m1 0h4m1 0h5M0 11.5h1m1 0h1m2 0h1m1 0h5m1 0h1m2 0h9m1 0h3m1 0h3m1 0h1m1 0h2m1 0h2m1 0h1m1 0h1m2 0h1m1 0h2m1 0h1m4 0h5m1 0h1M0 12.5h2m3 0h1m1 0h2m2 0h1m1 0h14m1 0h4m1 0h4m2 0h6m2 0h8m3 0h3m2 0h1M0 13.5h1m1 0h1m1 0h1m1 0h1m1 0h3m2 0h2m2 0h1m1 0h4m2 0h2m2 0h1m1 0h2m1 0h3m2 0h1m1 0h3m4 0h4m1 0h2m1 0h1m1 0h4m1 0h1M0 14.5h4m1 0h3m3 0h6m1 0h1m1 0h5m2 0h2m2 0h3m1 0h8m3 0h1m1 0h2m1 0h2m1 0h3m1 0h1m1 0h4M1 15.5h1m2 0h1m1 0h4m1 0h1m1 0h2m1 0h8m1 0h4m1 0h1m1 0h1m1 0h3m1 0h1m3 0h2m2 0h5m3 0h1m3 0h4m1 0h1M2 16.5h1m1 0h3m1 0h2m1 0h1m1 0h7m1 0h1m1 0h3m1 0h2m1 0h2m1 0h3m1 0h1m2 0h1m1 0h1m1 0h11m1 0h5M0 17.5h7m2 0h2m1 0h8m1 0h3m3 0h1m1 0h7m2 0h2m1 0h5m3 0h1m2 0h1m1 0h2m1 0h2m2 0h1m1 0h1M0 18.5h1m1 0h2m5 0h1m1 0h7m1 0h1m1 0h3m1 0h5m1 0h1m2 0h5m1 0h1m1 0h3m1 0h1m2 0h3m1 0h1m1 0h1m2 0h5M3 19.5h5m2 0h1m2 0h3m3 0h6m2 0h1m1 0h1m1 0h3m2 0h2m1 0h7m1 0h3m3 0h7m1 0h1m1 0h1M0 20.5h23m1 0h3m3 0h1m1 0h6m3 0h1m3 0h1m1 0h3m3 0h1m1 0h1m1 0h4m1 0h2M0 21.5h1m3 0h2m1 0h1m2 0h3m3 0h2m1 0h3m1 0h4m1 0h2m5 0h2m1 0h6m6 0h1m3 0h1m1 0h2m2 0h4M2 22.5h1m1 0h6m1 0h5m2 0h4m2 0h5m1 0h2m1 0h8m1 0h4m1 0h5m2 0h1m1 0h4m1 0h2M0 23.5h6m1 0h1m2 0h1m1 0h2m4 0h3m1 0h1m2 0h5m1 0h1m1 0h1m1 0h2m1 0h1m2 0h3m1 0h8m1 0h3m2 0h3m1 0h1M2 24.5h4m1 0h1m1 0h1m1 0h2m2 0h1m1 0h2m2 0h4m1 0h3m1 0h1m3 0h7m3 0h6m1 0h1m3 0h2m1 0h2m3 0h1M0 25.5h4m1 0h4m1 0h1m1 0h2m1 0h4m2 0h5m1 0h1m1 0h5m1 0h6m2 0h1m3 0h1m2 0h3m3 0h6M0 26.5h1m1 0h6m2 0h3m1 0h2m1 0h1m1 0h2m1 0h6m1 0h3m2 0h5m1 0h1m1 0h3m1 0h2m1 0h4m1 0h8M0 27.5h1m1 0h3m1 0h5m2 0h2m5 0h1m1 0h3m2 0h1m1 0h1m2 0h2m1 0h5m1 0h2m1 0h3m1 0h4m1 0h4m2 0h3m1 0h1M0 28.5h1m1 0h1m1 0h3m1 0h2m1 0h4m1 0h5m2 0h4m1 0h6m2 0h3m1 0h3m1 0h1m1 0h9m1 0h1m1 0h6M0 29.5h2m1 0h1m1 0h1m3 0h1m1 0h2m1 0h1m1 0h4m1 0h2m1 0h8m1 0h3m1 0h2m1 0h1m1 0h5m1 0h1m1 0h2m2 0h3m2 0h1m1 0h3M0 30.5h3m1 0h1m4 0h2m2 0h1m1 0h2m1 0h1m1 0h1m1 0h4m1 0h4m2 0h1m1 0h7m1 0h1m1 0h1m1 0h2m1 0h1m1 0h6m1 0h1m1 0h3M0 31.5h1m2 0h5m2 0h4m2 0h2m1 0h1m1 0h1m1 0h1m1 0h1m3 0h5m1 0h1m1 0h5m1 0h1m1 0h1m1 0h1m1 0h1m2 0h3m4 0h5M1 32.5h5m6 0h1m1 0h4m2 0h1m1 0h2m2 0h9m1 0h4m3 0h5m2 0h1m1 0h5m1 0h5M0 33.5h4m3 0h2m3 0h1m1 0h2m2 0h6m2 0h1m3 0h2m3 0h4m3 0h1m2 0h2m1 0h3m1 0h6m1 0h3m1 0h1M0 34.5h2m1 0h5m1 0h2m1 0h3m1 0h2m2 0h1m1 0h4m1 0h2m1 0h4m1 0h5m1 0h1m2 0h6m1 0h6m1 0h1m3 0h2M1 35.5h2m1 0h1m1 0h1m1 0h3m1 0h2m1 0h3m2 0h1m2 0h2m1 0h4m4 0h1m1 0h1m1 0h1m5 0h4m1 0h3m2 0h2m2 0h4M0 36.5h1m1 0h2m1 0h2m3 0h2m1 0h1m2 0h2m1 0h2m1 0h1m1 0h6m1 0h3m1 0h1m1 0h3m1 0h4m1 0h6m1 0h1m2 0h1m1 0h1m1 0h1m2 0h1M2 37.5h2m2 0h1m1 0h2m1 0h1m2 0h2m1 0h2m1 0h2m3 0h3m1 0h2m3 0h1m1 0h2m1 0h1m1 0h3m1 0h3m2 0h1m1 0h2m1 0h2m5 0h2M2 38.5h3m1 0h2m2 0h4m1 0h1m1 0h1m1 0h1m2 0h4m1 0h4m5 0h3m1 0h1m1 0h3m1 0h2m1 0h3m1 0h3m1 0h3m1 0h3M0 39.5h1m1 0h5m3 0h1m1 0h5m1 0h1m1 0h5m1 0h1m1 0h1m2 0h6m1 0h4m1 0h3m1 0h1m1 0h1m1 0h4m1 0h1m1 0h5M0 40.5h5m1 0h2m1 0h1m1 0h1m1 0h6m2 0h2m1 0h1m2 0h1m1 0h1m2 0h6m1 0h2m1 0h8m2 0h2m1 0h3m1 0h4M0 41.5h5m2 0h3m1 0h2m1 0h1m1 0h3m1 0h3m1 0h1m1 0h1m2 0h4m1 0h2m3 0h1m2 0h2m1 0h1m2 0h2m1 0h1m2 0h5m1 0h3M1 42.5h4m1 0h7m1 0h3m1 0h3m2 0h1m2 0h2m1 0h1m1 0h10m2 0h1m1 0h1m1 0h1m4 0h1m1 0h9M0 43.5h1m5 0h1m2 0h1m1 0h8m1 0h8m1 0h3m2 0h2m1 0h1m1 0h2m1 0h2m1 0h11m1 0h7M1 44.5h1m1 0h12m2 0h3m1 0h1m1 0h7m1 0h3m1 0h2m2 0h1m1 0h1m1 0h11m1 0h4m1 0h1M2 45.5h4m3 0h1m1 0h4m1 0h1m1 0h1m2 0h2m1 0h3m1 0h9m1 0h2m1 0h1m2 0h3m2 0h2m1 0h1m2 0h4m1 0h4M0 46.5h1m1 0h2m1 0h1m1 0h2m1 0h1m1 0h5m2 0h9m2 0h1m1 0h3m1 0h1m2 0h1m3 0h1m1 0h1m1 0h4m1 0h2m3 0h5m1 0h1M2 47.5h5m1 0h13m1 0h1m1 0h1m1 0h1m4 0h1m2 0h1m3 0h5m1 0h3m1 0h2m2 0h1m1 0h1m1 0h8M0 48.5h3m1 0h2m2 0h2m1 0h2m1 0h4m3 0h2m4 0h5m1 0h1m2 0h6m2 0h7m1 0h3m1 0h1m2 0h4M0 49.5h1m3 0h3m1 0h3m1 0h3m2 0h1m1 0h6m2 0h2m1 0h2m2 0h2m1 0h1m1 0h1m1 0h1m1 0h3m1 0h7m1 0h1m2 0h1m2 0h2M0 50.5h1m1 0h4m1 0h11m1 0h1m1 0h1m2 0h1m1 0h1m3 0h2m1 0h1m1 0h1m1 0h2m1 0h1m1 0h4m2 0h7m1 0h3m1 0h4M1 51.5h2m2 0h1m1 0h2m1 0h1m1 0h1m1 0h3m3 0h7m2 0h1m1 0h4m5 0h1m3 0h1m2 0h2m3 0h2m2 0h2m1 0h4M0 52.5h4m2 0h1m1 0h5m1 0h2m1 0h5m1 0h1m1 0h2m2 0h4m1 0h1m4 0h2m1 0h1m1 0h3m2 0h2m2 0h3m2 0h1m1 0h1m2 0h1M0 53.5h1m1 0h3m1 0h1m1 0h4m1 0h4m1 0h2m1 0h5m1 0h5m2 0h1m3 0h1m1 0h4m3 0h1m1 0h4m2 0h1m2 0h1m2 0h3M2 54.5h3m1 0h2m1 0h3m1 0h1m1 0h4m1 0h8m1 0h1m1 0h2m1 0h3m1 0h1m2 0h2m1 0h1m1 0h1m1 0h1m1 0h1m1 0h1m1 0h1m2 0h1m2 0h2M0 55.5h2m2 0h10m1 0h2m1 0h1m5 0h4m4 0h4m1 0h1m2 0h4m1 0h2m1 0h3m5 0h1m1 0h2m1 0h3M0 56.5h2m2 0h3m2 0h8m2 0h1m4 0h2m1 0h1m1 0h5m1 0h4m4 0h2m1 0h1m1 0h2m1 0h2m2 0h3m1 0h5M1 57.5h5m3 0h9m2 0h3m1 0h1m2 0h3m1 0h5m1 0h12m2 0h1m1 0h3m1 0h1m2 0h1m2 0h1M0 58.5h1m1 0h1m1 0h4m1 0h12m2 0h1m1 0h3m1 0h6m1 0h9m1 0h1m1 0h1m2 0h1m1 0h1m1 0h1m2 0h2m1 0h3M1 59.5h1m1 0h2m3 0h2m1 0h4m1 0h1m1 0h6m1 0h2m2 0h1m1 0h4m1 0h1m3 0h2m1 0h3m1 0h7m1 0h3m1 0h4M0 60.5h2m3 0h7m1 0h1m2 0h11m1 0h8m1 0h10m2 0h1m2 0h7m1 0h1m1 0h2M0 61.5h1m1 0h1m1 0h3m1 0h3m3 0h4m1 0h6m1 0h2m2 0h1m3 0h2m2 0h3m1 0h2m3 0h3m1 0h1m1 0h3m1 0h1m1 0h5M0 62.5h2m2 0h1m1 0h1m1 0h4m1 0h3m1 0h6m1 0h4m1 0h1m1 0h1m2 0h2m1 0h3m2 0h5m1 0h2m3 0h1m2 0h2m1 0h5M0 63.5h1m1 0h4m1 0h7m1 0h3m4 0h1m1 0h2m1 0h1m1 0h1m1 0h2m1 0h2m1 0h2m1 0h1m1 0h1m1 0h1m1 0h3m2 0h3m1 0h3m1 0h1m2 0h1"/></pattern>
    <pattern id="pw2" width="96" height="96" patternUnits="userSpaceOnUse"><path stroke="#fff" stroke-width="1" fill="none" d="M6 .5h1m9 0h1m9 0h1m21 0h1m8 0h1m1 0h1m2 0h1m3 0h2m14 0h1M3 1.5h1m8 0h1m1 0h1m49 0h1M4 2.5h1m6 0h1m2 0h1m4 0h1m6 0h1m6 0h1m19 0h1m30 0h1M14 3.5h1m5 0h1m33 0h1m4 0h1m13 0h1m3 0h1m10 0h1M22 4.5h1m1 0h1m28 0h1m1 0h1m3 0h1m18 0h1m14 0h1M15 5.5h1m3 0h1m9 0h1m1 0h1m5 0h2m13 0h1m26 0h1M14 6.5h2m9 0h1m24 0h1m1 0h1m21 0h1m12 0h1m5 0h1M41 7.5h1m36 0h1M58 8.5h1m14 0h1m2 0h1m4 0h1m9 0h1M3 9.5h2m28 0h1m7 0h1m26 0h1m5 0h1m1 0h1m2 0h1M12 10.5h1m20 0h1m2 0h2m3 0h1m23 0h1M18 11.5h1m22 0h1m29 0h1M6 12.5h1m20 0h1m15 0h1m3 0h1m13 0h1m16 0h2m7 0h1M0 13.5h1m9 0h1m12 0h1m29 0h1m3 0h1m7 0h2M5 14.5h1m28 0h1m24 0h1m8 0h1M10 15.5h1m13 0h1m3 0h1m5 0h1m19 0h1m10 0h1m19 0h1m2 0h1M35 16.5h1m2 0h1m8 0h1m15 0h1M28 17.5h1m3 0h1m13 0h1m22 0h1m2 0h1m5 0h1M12 18.5h1m2 0h1m14 0h1m3 0h1m30 0h1m12 0h1m12 0h1M6 19.5h1m22 0h1m3 0h2M4 20.5h1m21 0h1m12 0h1m41 0h2M5 21.5h1m73 0h1m4 0h1M9 22.5h1m82 0h1M30 24.5h1m6 0h1m7 0h1m48 0h1M21 25.5h1m11 0h1m23 0h1m16 0h1m1 0h1m5 0h1m1 0h1M19 26.5h1m18 0h1m19 0h1m8 0h1m1 0h1m24 0h2M42 27.5h1m4 0h1m3 0h1m34 0h1M5 28.5h1m10 0h1m48 0h1M10 29.5h1m5 0h1m22 0h1m1 0h1m5 0h2m4 0h1m9 0h1m18 0h1M43 30.5h1m11 0h1m18 0h1m13 0h1m2 0h1M10 31.5h1m16 0h1m4 0h1m10 0h1m7 0h1m28 0h1M0 32.5h1m13 0h1m54 0h1m11 0h1m3 0h1M27 33.5h1m57 0h2M19 34.5h1m5 0h1m14 0h1m13 0h3m1 0h1m35 0h1M9 35.5h1m24 0h1m6 0h1M19 36.5h1m1 0h1m13 0h1m11 0h1m26 0h1m17 0h1m2 0h1M9 37.5h1m2 0h1m21 0h1m20 0h1m18 0h1m15 0h1M16 38.5h1M1 39.5h1m8 0h1m21 0h1M17 40.5h1m3 0h1m63 0h1M26 41.5h1m3 0h1m10 0h1m20 0h1m10 0h1m10 0h1m4 0h1M3 42.5h1m1 0h1m11 0h1m6 0h1m15 0h1m4 0h1m11 0h2m27 0h1m5 0h1M0 43.5h1m8 0h1m21 0h2m12 0h1m3 0h1m1 0h1m18 0h1M4 44.5h1m27 0h1m11 0h1m13 0h1M0 45.5h1m21 0h2m4 0h1m18 0h1m20 0h1m7 0h1M51 46.5h1m13 0h1m10 0h1m3 0h1M11 47.5h1m14 0h1m2 0h1m10 0h1M14 48.5h1m9 0h1m7 0h1m16 0h1m12 0h1m4 0h1m14 0h1M2 49.5h1m21 0h1m2 0h1m27 0h1m28 0h1M16 50.5h1m22 0h1m6 0h1m5 0h1m4 0h1m15 0h1m11 0h1m4 0h1M6 51.5h1m3 0h1m4 0h1m1 0h1m3 0h1m23 0h1m21 0h1m2 0h1M23 52.5h1m26 0h1m12 0h1M3 53.5h1m11 0h1m1 0h1m9 0h1m39 0h1m12 0h1m11 0h1M0 54.5h1m26 0h1m3 0h1m28 0h1m22 0h1M8 55.5h1m8 0h1m6 0h1m15 0h1m2 0h1m10 0h1m5 0h1m5 0h1m12 0h1M8 56.5h1m4 0h1m5 0h1m31 0h1m27 0h1m9 0h1m5 0h1M15 57.5h1m16 0h1m10 0h1m25 0h1m13 0h1M51 58.5h1m12 0h1M31 59.5h1m28 0h1m3 0h1m21 0h1M2 60.5h1m18 0h1m13 0h1m9 0h1m2 0h1M1 61.5h2m35 0h1m10 0h1m15 0h1m1 0h2m13 0h1m5 0h1M24 62.5h1m7 0h1m4 0h1m6 0h2m9 0h1m21 0h1m11 0h1M28 63.5h1m13 0h1m11 0h1m25 0h1M3 64.5h1m30 0h1m25 0h1m18 0h1m12 0h1m2 0h1M25 65.5h1m7 0h1m9 0h1m10 0h1m17 0h2m13 0h1m1 0h1M58 66.5h1m11 0h1m11 0h1m12 0h1M4 67.5h1m5 0h1m2 0h1m2 0h1m24 0h1m5 0h1m3 0h1m3 0h1m3 0h1m28 0h1M11 68.5h1m4 0h1m25 0h1m12 0h1m8 0h1m16 0h1M7 69.5h1m11 0h1m4 0h1m23 0h1m17 0h1m5 0h1M27 70.5h1m15 0h1m16 0h1m8 0h1m7 0h1m1 0h1m10 0h1m3 0h1M14 71.5h1m24 0h1m15 0h1m11 0h1m22 0h1m3 0h2M20 72.5h1m19 0h2m26 0h1m4 0h1m19 0h1M8 73.5h1m9 0h2m18 0h1m45 0h1m8 0h1M8 74.5h2m1 0h1m3 0h1m15 0h1m15 0h1m22 0h1m4 0h1m1 0h1m13 0h1M55 75.5h1m18 0h2m5 0h1M17 76.5h1m4 0h1m6 0h2m5 0h1m29 0h1m14 0h1M1 77.5h1m58 0h1m13 0h1m6 0h1M10 78.5h1m17 0h1m25 0h1m2 0h1m10 0h1M24 79.5h1m4 0h1m7 0h1m30 0h1m10 0h1M57 80.5h1M5 81.5h1m40 0h2m31 0h1m11 0h1M2 82.5h1m1 0h1m4 0h1m54 0h1m7 0h1m12 0h1m2 0h1M0 83.5h1m7 0h1m34 0h1m14 0h1m6 0h1m6 0h2m5 0h1m10 0h1M8 84.5h1m18 0h1m11 0h1m31 0h1m19 0h1M37 85.5h1m5 0h1m13 0h1m8 0h1M9 86.5h1m2 0h1m3 0h1m1 0h1m18 0h1m4 0h1m39 0h1M17 87.5h1m1 0h1m6 0h1m56 0h1M33 88.5h1m1 0h1m1 0h2m31 0h1m5 0h1M6 89.5h1M27 90.5h1m11 0h1m50 0h1M0 91.5h1m18 0h1m11 0h1m7 0h1m19 0h1m17 0h1m12 0h1M0 92.5h1m10 0h1m2 0h1m8 0h1m2 0h1m12 0h1m7 0h1m32 0h1m6 0h1M1 93.5h1m38 0h1m3 0h1m13 0h2m28 0h1M26 94.5h1m6 0h1m3 0h1m31 0h1M1 95.5h1m14 0h1m8 0h1m14 0h1m20 0h1m26 0h1"/></pattern>
      <pattern id="pw3" href="#pw2" patternTransform="translate(37,53)"/>
      <clipPath id="cpIn"><polygon points="194.0,218.0 200.5,203.0 222.5,179.5 241.5,161.5 262.0,150.0 278.0,144.6 289.0,144.6 313.0,151.0 332.0,157.0 354.0,166.5 380.0,175.0 391.5,182.5 390.0,192.0 385.0,203.0 397.0,212.5 413.7,223.0 420.0,242.0 430.6,257.0 447.6,269.7 460.0,280.0 472.0,283.0 488.0,278.0 513.0,273.0 532.0,268.0 543.0,264.0 581.4,281.4 630.9,302.4 670.4,318.5 692.6,324.7 705.0,317.0 717.0,298.7 723.5,285.0 716.0,269.0 715.0,263.0 729.7,266.6 754.4,275.0 771.7,284.0 780.4,293.8 781.6,306.0 776.7,330.9 766.8,355.6 759.4,380.0 750.0,408.6 741.5,425.6 733.0,442.5 720.3,455.2 707.6,462.6 690.6,467.9 673.7,466.9 656.7,463.7 635.6,461.6 614.4,461.6 593.2,459.5 572.0,457.3 563.9,458.4 542.7,458.4 521.5,459.0 500.3,457.3 479.0,454.0 458.0,447.8 436.7,439.3 415.6,429.8 394.4,419.0 373.0,409.7 361.0,406.0 329.9,392.0 298.8,373.6 267.7,352.0 242.8,333.0 227.0,311.5 213.0,280.0 202.0,252.0 194.6,227.5"/></clipPath>
    </defs>
    <path id="cloudOuter" fill-rule="evenodd" fill="url(#py)" d="M183.5,220.0 L190.0,202.5 L214.0,177.0 L235.5,158.7 L256.7,145.3 L273.7,139.7 L285.0,139.0 L306.0,143.0 L312.0,145.0 L354.0,155.0 L397.0,166.0 L417.5,172.0 L403.0,191.0 L399.0,195.5 L424.0,211.5 L427.5,219.0 L428.5,229.5 L437.0,246.0 L456.0,263.0 L473.0,274.0 L488.0,272.0 L513.0,265.5 L532.0,260.4 L542.0,256.7 L581.4,274.0 L630.9,295.0 L670.4,311.0 L690.0,317.0 L697.6,313.6 L710.0,296.0 L716.0,285.0 L706.0,271.5 L702.5,261.7 L708.7,254.0 L729.7,260.4 L754.4,267.8 L779.0,277.7 L789.0,287.6 L792.0,303.7 L789.0,330.9 L781.6,355.6 L774.0,380.0 L765.6,407.0 L756.0,429.8 L747.8,448.9 L737.0,463.7 L724.5,476.4 L709.7,482.8 L699.0,485.3 L678.0,481.7 L656.7,479.6 L642.0,480.6 L625.0,476.4 L603.8,473.2 L586.8,473.2 L576.6,469.0 L563.9,467.9 L542.7,470.5 L521.5,470.0 L500.3,467.9 L479.0,466.9 L458.0,463.7 L436.7,453.0 L415.6,443.6 L394.4,434.0 L373.0,424.5 L348.5,415.6 L317.0,401.6 L286.0,384.5 L255.0,359.6 L236.6,342.6 L219.5,320.8 L208.6,296.0 L199.0,271.0 L190.0,246.0 L183.8,227.5 Z M194.0,218.0 L200.5,203.0 L222.5,179.5 L241.5,161.5 L262.0,150.0 L278.0,144.6 L289.0,144.6 L313.0,151.0 L332.0,157.0 L354.0,166.5 L380.0,175.0 L391.5,182.5 L390.0,192.0 L385.0,203.0 L397.0,212.5 L413.7,223.0 L420.0,242.0 L430.6,257.0 L447.6,269.7 L460.0,280.0 L472.0,283.0 L488.0,278.0 L513.0,273.0 L532.0,268.0 L543.0,264.0 L581.4,281.4 L630.9,302.4 L670.4,318.5 L692.6,324.7 L705.0,317.0 L717.0,298.7 L723.5,285.0 L716.0,269.0 L715.0,263.0 L729.7,266.6 L754.4,275.0 L771.7,284.0 L780.4,293.8 L781.6,306.0 L776.7,330.9 L766.8,355.6 L759.4,380.0 L750.0,408.6 L741.5,425.6 L733.0,442.5 L720.3,455.2 L707.6,462.6 L690.6,467.9 L673.7,466.9 L656.7,463.7 L635.6,461.6 L614.4,461.6 L593.2,459.5 L572.0,457.3 L563.9,458.4 L542.7,458.4 L521.5,459.0 L500.3,457.3 L479.0,454.0 L458.0,447.8 L436.7,439.3 L415.6,429.8 L394.4,419.0 L373.0,409.7 L361.0,406.0 L329.9,392.0 L298.8,373.6 L267.7,352.0 L242.8,333.0 L227.0,311.5 L213.0,280.0 L202.0,252.0 L194.6,227.5 Z"/>
    <polygon id="cloudInner" fill="url(#pw)" points="194.0,218.0 200.5,203.0 222.5,179.5 241.5,161.5 262.0,150.0 278.0,144.6 289.0,144.6 313.0,151.0 332.0,157.0 354.0,166.5 380.0,175.0 391.5,182.5 390.0,192.0 385.0,203.0 397.0,212.5 413.7,223.0 420.0,242.0 430.6,257.0 447.6,269.7 460.0,280.0 472.0,283.0 488.0,278.0 513.0,273.0 532.0,268.0 543.0,264.0 581.4,281.4 630.9,302.4 670.4,318.5 692.6,324.7 705.0,317.0 717.0,298.7 723.5,285.0 716.0,269.0 715.0,263.0 729.7,266.6 754.4,275.0 771.7,284.0 780.4,293.8 781.6,306.0 776.7,330.9 766.8,355.6 759.4,380.0 750.0,408.6 741.5,425.6 733.0,442.5 720.3,455.2 707.6,462.6 690.6,467.9 673.7,466.9 656.7,463.7 635.6,461.6 614.4,461.6 593.2,459.5 572.0,457.3 563.9,458.4 542.7,458.4 521.5,459.0 500.3,457.3 479.0,454.0 458.0,447.8 436.7,439.3 415.6,429.8 394.4,419.0 373.0,409.7 361.0,406.0 329.9,392.0 298.8,373.6 267.7,352.0 242.8,333.0 227.0,311.5 213.0,280.0 202.0,252.0 194.6,227.5"/>
    <g clip-path="url(#cpIn)"><rect x="150" y="225" width="700" height="300" fill="url(#pw2)"/><rect x="150" y="320" width="700" height="200" fill="url(#pw3)"/></g>
  </svg>
  <span class="t" style="left:8px;top:600px;color:#fff;font-size:13px;letter-spacing:0.28px;">New size = 975 * 624 (px)</span>
</div>
<!--MISC-START-->
<svg class="abs" style="left:0;top:0" width="1316" height="708" viewBox="0 0 1316 708" font-family="Liberation Sans, sans-serif">
  <defs>
    <g id="cclogo" fill="none" stroke="#1068a0" stroke-width="1.700">
      <path d="M8.300,1.600 A4.700,4.600 0 1 0 8.300,8.800"/>
      <path d="M12.800,1.600 A4.700,4.600 0 1 0 12.800,8.800"/>
      <path d="M8.600,0.400 V3 M13.100,0.400 V3 M13.100,7.400 V10" stroke-width="1"/>
    </g>
    <g id="floatbtn" fill="none" stroke="#1a1a1a" stroke-width="1" shape-rendering="crispEdges">
      <path d="M3.500,0 V3 M8.500,0 V5.500 H7"/>
      <rect x="3" y="0" width="6" height="2" fill="#1a1a1a" stroke="none"/>
      <rect x="1.500" y="3.500" width="5" height="5" fill="#d9d9d9"/>
      <rect x="1" y="3" width="6" height="2" fill="#1a1a1a" stroke="none"/>
    </g>
  </defs>
  <!-- logos -->
  <use href="#cclogo" x="3.500" y="5.800"/>
  <use href="#cclogo" x="1.500" y="28"/>
  <!-- window controls -->
  <rect x="1245" y="10" width="10" height="1" fill="#000" shape-rendering="crispEdges"/>
  <g fill="none" stroke="#000" stroke-width="1" shape-rendering="crispEdges">
    <path d="M1292.500,7.500 V5.500 H1299.500 V12.500 H1297.500"/>
    <rect x="1290.500" y="7.500" width="7" height="7" rx="1"/>
  </g>
  <!-- mdi corner button -->
  <rect x="1312.500" y="24.500" width="6" height="17" fill="#fdfdfd" stroke="#d8d8d8"/>
  <!-- dock float buttons -->
  <use href="#floatbtn" x="308" y="84"/>
  <use href="#floatbtn" x="308" y="418"/>
  <!-- right strip -->
  <rect x="1303" y="78" width="1" height="625" fill="#ffffff"/>
  <g fill="#a0a0a0">
    <rect x="1308" y="82" width="2" height="1"/><rect x="1307" y="83" width="2" height="1"/>
    <rect x="1312" y="82" width="2" height="1"/><rect x="1311" y="83" width="2" height="1"/>
    <rect x="1315" y="83" width="1" height="1"/>
    <rect x="1308" y="154" width="2" height="1"/><rect x="1307" y="155" width="2" height="1"/>
    <rect x="1312" y="154" width="2" height="1"/><rect x="1311" y="155" width="2" height="1"/>
    <rect x="1315" y="155" width="1" height="1"/>
    <rect x="1304" y="149" width="12" height="1"/>
  </g>
  <rect x="1304" y="150" width="12" height="1" fill="#fff"/>
  <circle cx="1315" cy="290" r="3.700" fill="none" stroke="#555" stroke-width="1"/>
  <!-- view frame highlights -->
  <rect x="327" y="78" width="1" height="625" fill="#fbfbfb"/>
  <rect x="327" y="702" width="977" height="1" fill="#fbfbfb"/>
  <!-- left toolbar border -->
  <rect x="0" y="78" width="34" height="1" fill="#ffffff"/>
  <rect x="34" y="78" width="1" height="624" fill="#b6b6b6"/>
    <rect x="0" y="701" width="35" height="1" fill="#b6b6b6"/>
  <!-- view overlays -->
  <g stroke="#fff" stroke-width="1" shape-rendering="crispEdges">
    <path d="M1068,672.500 H1233 M1068.500,669 V676 M1232.500,669 V676"/>
  </g>
  <path d="M1268,647 V672" stroke="#00f000" stroke-width="2" shape-rendering="crispEdges"/>
  <path d="M1268,672 H1293" stroke="#f00000" stroke-width="2" shape-rendering="crispEdges"/>
  <text x="1150.500" y="689" font-size="13.200" fill="#fff" text-anchor="middle">100</text>
  <!-- pivot cross -->
  <path d="M665.500,436 V449 M659,442.500 H672" stroke="#e8e060" stroke-width="1" opacity="0.700" shape-rendering="crispEdges"/>
</svg>
<!--MISC-END-->
</body>
</html>
